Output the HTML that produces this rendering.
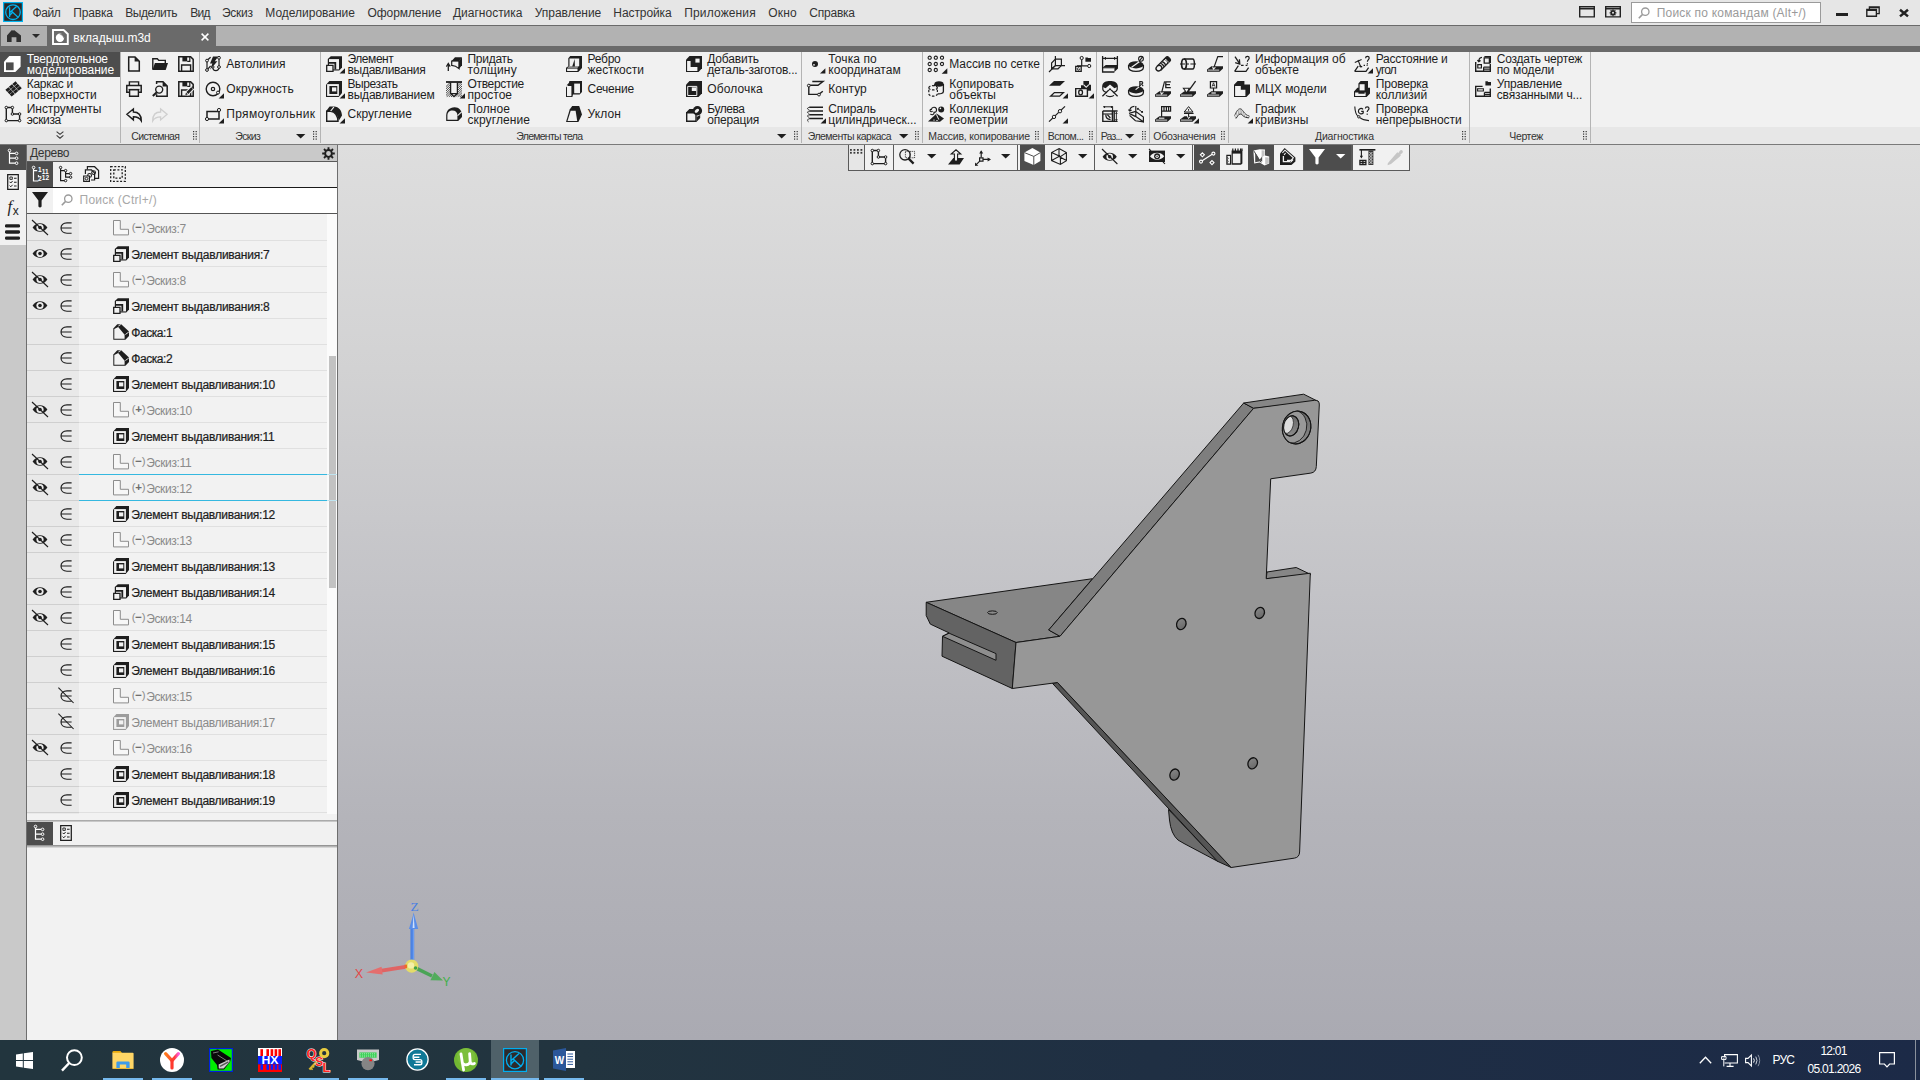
<!DOCTYPE html>
<html><head><meta charset="utf-8"><title>KOMPAS-3D</title>
<style>
html,body{margin:0;padding:0;}
body{width:1920px;height:1080px;overflow:hidden;position:relative;font-family:"Liberation Sans", sans-serif;background:#f0f0f0;}
svg{overflow:visible}
</style></head><body>
<div style="position:absolute;left:0px;top:0px;width:1920px;height:25px;background:#e6e6e6;"></div><svg style="position:absolute;left:3.00px;top:2.00px;" width="20" height="20" viewBox="0 0 20 20"><rect x="0.6" y="0.6" width="18.8" height="18.8" fill="#2c2727" stroke="#00b4f0" stroke-width="1.2"/><circle cx="10" cy="10.2" r="7.3" fill="none" stroke="#00b4f0" stroke-width="1.3"/><path d="M6.6 5.2 V15 M6.8 10.5 L13.5 4.6 M8.6 9.2 L15.2 15.4 M6.8 13.2 L9.6 10.3" fill="none" stroke="#00b4f0" stroke-width="1.3" /></svg><span style="position:absolute;top:7.00px;font-size:12px;line-height:12px;color:#333;white-space:nowrap;left:32.50px;letter-spacing:-0.405px;">Файл</span><span style="position:absolute;top:7.00px;font-size:12px;line-height:12px;color:#333;white-space:nowrap;left:73.30px;letter-spacing:-0.169px;">Правка</span><span style="position:absolute;top:7.00px;font-size:12px;line-height:12px;color:#333;white-space:nowrap;left:125.30px;letter-spacing:-0.451px;">Выделить</span><span style="position:absolute;top:7.00px;font-size:12px;line-height:12px;color:#333;white-space:nowrap;left:190.30px;letter-spacing:-0.800px;">Вид</span><span style="position:absolute;top:7.00px;font-size:12px;line-height:12px;color:#333;white-space:nowrap;left:222.00px;letter-spacing:-0.273px;">Эскиз</span><span style="position:absolute;top:7.00px;font-size:12px;line-height:12px;color:#333;white-space:nowrap;left:265.30px;letter-spacing:-0.008px;">Моделирование</span><span style="position:absolute;top:7.00px;font-size:12px;line-height:12px;color:#333;white-space:nowrap;left:367.50px;letter-spacing:-0.076px;">Оформление</span><span style="position:absolute;top:7.00px;font-size:12px;line-height:12px;color:#333;white-space:nowrap;left:453.00px;letter-spacing:-0.008px;">Диагностика</span><span style="position:absolute;top:7.00px;font-size:12px;line-height:12px;color:#333;white-space:nowrap;left:534.70px;letter-spacing:-0.013px;">Управление</span><span style="position:absolute;top:7.00px;font-size:12px;line-height:12px;color:#333;white-space:nowrap;left:613.30px;letter-spacing:-0.085px;">Настройка</span><span style="position:absolute;top:7.00px;font-size:12px;line-height:12px;color:#333;white-space:nowrap;left:684.30px;letter-spacing:0.131px;">Приложения</span><span style="position:absolute;top:7.00px;font-size:12px;line-height:12px;color:#333;white-space:nowrap;left:768.30px;letter-spacing:0.170px;">Окно</span><span style="position:absolute;top:7.00px;font-size:12px;line-height:12px;color:#333;white-space:nowrap;left:809.30px;letter-spacing:-0.230px;">Справка</span><svg style="position:absolute;left:1579.00px;top:6.20px;" width="16" height="11.6" viewBox="0 0 16 11.6"><path d="M0.7 0.7 H15.3 V10.9 H0.7 Z M0.7 2.7 H15.3" fill="none" stroke="#222" stroke-width="1.4" /></svg><svg style="position:absolute;left:1605.00px;top:6.20px;" width="16" height="11.6" viewBox="0 0 16 11.6"><path d="M0.7 0.7 H15.3 V10.9 H0.7 Z M0.7 2.7 H15.3" fill="none" stroke="#222" stroke-width="1.4" /><circle cx="8" cy="6.8" r="2.5" fill="#222"/><path d="M8 3.4 V10.2 M4.6 6.8 H11.4 M5.6 4.4 L10.4 9.2 M10.4 4.4 L5.6 9.2" fill="none" stroke="#222" stroke-width="1.3" /><circle cx="8" cy="6.8" r="1" fill="#e6e6e6"/></svg><div style="position:absolute;left:1631.3px;top:2.3px;width:189.4px;height:21.2px;background:#fff;border:1px solid #9a9a9a;box-sizing:border-box;"></div><svg style="position:absolute;left:1638.00px;top:6.50px;" width="12" height="12" viewBox="0 0 12 12"><circle cx="7.3" cy="4.7" r="3.7" fill="none" stroke="#9a9a9a" stroke-width="1.3"/><path d="M4.6 7.4 L0.8 11.2" fill="none" stroke="#9a9a9a" stroke-width="1.6" /></svg><span style="position:absolute;top:7.00px;font-size:12px;line-height:12px;color:#9a9a9a;white-space:nowrap;left:1656.70px;letter-spacing:0.208px;">Поиск по командам (Alt+/)</span><div style="position:absolute;left:1836.2px;top:13.4px;width:11.6px;height:2.6px;background:#222;"></div><svg style="position:absolute;left:1866.00px;top:6.00px;" width="14" height="11" viewBox="0 0 14 11"><path d="M0.8 3.4 H10.4 V10.2 H0.8 Z M0.8 4.4 H10.4" fill="none" stroke="#222" stroke-width="1.4" /><path d="M3.4 3.2 V0.9 H13.2 V7.6 H10.6 M3.4 1.6 H13.2" fill="none" stroke="#222" stroke-width="1.3" /></svg><svg style="position:absolute;left:1898.80px;top:8.60px;" width="10" height="8.2" viewBox="0 0 10 8.2"><path d="M1 0.8 L9 7.4 M9 0.8 L1 7.4" fill="none" stroke="#222" stroke-width="2.5" /></svg><div style="position:absolute;left:0px;top:25px;width:1920px;height:26.6px;background:#6a6a6a;"></div><div style="position:absolute;left:216px;top:26.3px;width:1704px;height:19.7px;background:#b2b2b2;"></div><div style="position:absolute;left:1px;top:26.3px;width:46px;height:19.7px;background:#b0b0b0;"></div><svg style="position:absolute;left:6.50px;top:30.00px;" width="14" height="12" viewBox="0 0 14 12"><path d="M0 5.6 L4.6 0.2 L5.8 0.2 L5.8 1 L7 0 L14 5.6 V12 H9.4 V7.2 H4.6 V12 H0 Z" fill="#303030" /></svg><svg style="position:absolute;left:32.00px;top:33.50px;" width="8" height="4" viewBox="0 0 8 4"><path d="M0 0 H8 L4 4 Z" fill="#2a2a2a" /></svg><svg style="position:absolute;left:52.00px;top:28.50px;" width="17" height="16" viewBox="0 0 17 16"><path d="M1 1 H11.6 L15.8 5 V15 H1 Z" fill="none" stroke="#fff" stroke-width="1.9" /><circle cx="8" cy="8.8" r="4.2" fill="#fff"/><path d="M8.6 6 A3 3 0 0 1 11.4 9 A3.6 3.6 0 0 0 8.6 6 Z M7.4 5.6 A3.4 3.4 0 0 1 11.6 9.6 A2.4 2.4 0 0 0 7.4 5.6Z" fill="#6a6a6a" /></svg><span style="position:absolute;top:32.00px;font-size:12px;line-height:12px;color:#fff;white-space:nowrap;left:73.30px;letter-spacing:0.013px;">вкладыш.m3d</span><svg style="position:absolute;left:200.70px;top:33.00px;" width="8" height="8" viewBox="0 0 8 8"><path d="M0.6 0.6 L7.4 7.4 M7.4 0.6 L0.6 7.4" fill="none" stroke="#fff" stroke-width="1.5" /></svg><div style="position:absolute;left:0px;top:51.6px;width:1920px;height:75.4px;background:#f1f1f1;"></div><div style="position:absolute;left:0px;top:127px;width:1920px;height:16.5px;background:#e7e7e7;"></div><div style="position:absolute;left:0px;top:143.5px;width:1920px;height:1.2px;background:#7a7a7a;"></div><div style="position:absolute;left:0px;top:51.5px;width:119.5px;height:25px;background:#4d4d4d;"></div><svg style="position:absolute;left:4.20px;top:56.00px;" width="16.6" height="16" viewBox="0 0 16.6 16"><path d="M0 5.7 L5.3 0 H16.6 V10.7 L11.3 16 H0 Z" fill="#fff" /><rect x="2" y="6.4" width="7.6" height="7.8" fill="#4d4d4d"/></svg><span style="position:absolute;top:53.00px;font-size:12px;line-height:12px;color:#fff;white-space:nowrap;left:26.70px;letter-spacing:-0.259px;">Твердотельное</span><span style="position:absolute;top:64.00px;font-size:12px;line-height:12px;color:#fff;white-space:nowrap;left:26.70px;letter-spacing:-0.035px;">моделирование</span><svg style="position:absolute;left:4.50px;top:81.00px;" width="17" height="16" viewBox="0 0 17 16"><g transform="matrix(3.5 -2.9 2.15 2.35 0.1 8.8)"><rect x="0.05" y="0.05" width="0.9" height="0.9" fill="#1e1e1e"/><rect x="0.05" y="1.05" width="0.9" height="0.9" fill="#1e1e1e"/><rect x="0.05" y="2.05" width="0.9" height="0.9" fill="#1e1e1e"/><rect x="1.05" y="0.05" width="0.9" height="0.9" fill="#1e1e1e"/><rect x="1.05" y="1.05" width="0.9" height="0.9" fill="#1e1e1e"/><rect x="1.05" y="2.05" width="0.9" height="0.9" fill="#1e1e1e"/><rect x="2.05" y="0.05" width="0.9" height="0.9" fill="#1e1e1e"/><rect x="2.05" y="1.05" width="0.9" height="0.9" fill="#1e1e1e"/><rect x="2.05" y="2.05" width="0.9" height="0.9" fill="#1e1e1e"/></g></svg><span style="position:absolute;top:78.00px;font-size:12px;line-height:12px;color:#1e1e1e;white-space:nowrap;left:26.70px;letter-spacing:-0.280px;">Каркас и</span><span style="position:absolute;top:89.00px;font-size:12px;line-height:12px;color:#1e1e1e;white-space:nowrap;left:26.70px;letter-spacing:-0.013px;">поверхности</span><svg style="position:absolute;left:5.00px;top:106.00px;" width="16" height="16" viewBox="0 0 16 16"><path d="M1.3 1.5 H7.4 V8 H14.6 V14.6 H1.3 Z" fill="none" stroke="#1e1e1e" stroke-width="1.4" /><circle cx="1.3" cy="1.5" r="1.25" fill="#f1f1f1" stroke="#1e1e1e" stroke-width="1"/><circle cx="7.4" cy="1.5" r="1.25" fill="#f1f1f1" stroke="#1e1e1e" stroke-width="1"/><circle cx="7.4" cy="8" r="1.25" fill="#f1f1f1" stroke="#1e1e1e" stroke-width="1"/><circle cx="14.6" cy="8" r="1.25" fill="#f1f1f1" stroke="#1e1e1e" stroke-width="1"/><circle cx="14.6" cy="14.6" r="1.25" fill="#f1f1f1" stroke="#1e1e1e" stroke-width="1"/><circle cx="1.3" cy="14.6" r="1.25" fill="#f1f1f1" stroke="#1e1e1e" stroke-width="1"/></svg><span style="position:absolute;top:103.00px;font-size:12px;line-height:12px;color:#1e1e1e;white-space:nowrap;left:26.70px;letter-spacing:-0.023px;">Инструменты</span><span style="position:absolute;top:114.00px;font-size:12px;line-height:12px;color:#1e1e1e;white-space:nowrap;left:26.70px;letter-spacing:-0.333px;">эскиза</span><svg style="position:absolute;left:56.00px;top:130.50px;" width="8" height="8" viewBox="0 0 8 8"><path d="M0.6 0.6 L4 3.4 L7.4 0.6 M0.6 4.4 L4 7.2 L7.4 4.4" fill="none" stroke="#3a3a3a" stroke-width="1.1" /></svg><div style="position:absolute;left:120.0px;top:52px;width:1px;height:91px;background:#b4b4b4;"></div><div style="position:absolute;left:199.0px;top:52px;width:1px;height:91px;background:#b4b4b4;"></div><svg style="position:absolute;left:126.00px;top:56.00px;" width="16" height="16" viewBox="0 0 16 16"><path d="M2.7 0.9 H9 L13.3 5.2 V15.1 H2.7 Z" fill="none" stroke="#1e1e1e" stroke-width="1.5" /><path d="M8.6 0.9 L13.3 5.6 H8.6 Z" fill="#1e1e1e" /></svg><svg style="position:absolute;left:152.00px;top:56.00px;" width="16" height="16" viewBox="0 0 16 16"><path d="M0.8 13.4 V2.7 H5.3 L6.8 4.4 H13.3 V7" fill="none" stroke="#1e1e1e" stroke-width="1.4" /><path d="M2.9 7 H16 L13.7 13.9 H0.4 Z" fill="#1e1e1e" /></svg><svg style="position:absolute;left:178.00px;top:56.00px;" width="16" height="16" viewBox="0 0 16 16"><path d="M0.8 0.8 H12.6 L15.2 3.4 V15.2 H0.8 Z" fill="none" stroke="#1e1e1e" stroke-width="1.5" /><path d="M4.4 0.8 H9.2 V5.4 H4.4 Z" fill="#1e1e1e" /><path d="M9.2 5.4 H11.8 V0.8" fill="none" stroke="#1e1e1e" stroke-width="1.2" /><path d="M3.6 15.2 V9 H12.6 V15.2" fill="none" stroke="#1e1e1e" stroke-width="1.4" /></svg><svg style="position:absolute;left:126.00px;top:81.00px;" width="16" height="16" viewBox="0 0 16 16"><path d="M3.4 4.2 V0.9 H12.6 V4.2" fill="none" stroke="#1e1e1e" stroke-width="1.4" /><path d="M3.4 11.3 H0.8 V4.4 H15.2 V11.3 H12.6" fill="none" stroke="#1e1e1e" stroke-width="1.5" /><path d="M3.6 8.6 H12.4 V15.2 H3.6 Z" fill="#f1f1f1" stroke="#1e1e1e" stroke-width="1.4" /><path d="M2.6 8.6 H13.4" fill="none" stroke="#1e1e1e" stroke-width="1.4" /></svg><svg style="position:absolute;left:152.00px;top:81.00px;" width="16" height="16" viewBox="0 0 16 16"><path d="M4.6 3 V0.8 H11 L15.2 5 V15.2 H4.6 V13.2" fill="none" stroke="#1e1e1e" stroke-width="1.5" /><path d="M10.6 0.8 L15.2 5.4 H10.6 Z" fill="#1e1e1e" /><circle cx="7.2" cy="8.6" r="3.5" fill="#f1f1f1" stroke="#1e1e1e" stroke-width="1.4"/><path d="M4.8 11.2 L0.8 15" fill="none" stroke="#1e1e1e" stroke-width="2" /></svg><svg style="position:absolute;left:178.00px;top:81.00px;" width="16" height="16" viewBox="0 0 16 16"><path d="M0.8 0.8 H12.6 L15.2 3.4 V15.2 H0.8 Z" fill="none" stroke="#1e1e1e" stroke-width="1.5" /><path d="M4.4 0.8 H9.2 V5.4 H4.4 Z" fill="#1e1e1e" /><path d="M9.2 5.4 H11.8 V0.8" fill="none" stroke="#1e1e1e" stroke-width="1.2" /><path d="M3.6 15.2 V9 H12.6 V15.2" fill="none" stroke="#1e1e1e" stroke-width="1.4" /><path d="M8.2 13.2 L14.6 6.8" fill="none" stroke="#f1f1f1" stroke-width="4.6" /><path d="M9.4 12 L14.2 7.2" fill="none" stroke="#1e1e1e" stroke-width="2.6" /><path d="M7.4 14 L8 11.6 L9.8 13.4 Z" fill="#1e1e1e" /><path d="M14.4 5.2 L16 6.8 L15.2 7.6 L13.6 6 Z" fill="#1e1e1e" /></svg><svg style="position:absolute;left:126.00px;top:107.50px;" width="16" height="14" viewBox="0 0 16 14"><path d="M0.9 6.3 L7.4 0.9 V4 C12.2 4 15.3 7.2 15.3 12.8 C13.5 9.8 11.2 8.8 7.4 8.8 V11.9 Z" fill="none" stroke="#1e1e1e" stroke-width="1.4" stroke-linejoin="miter"/></svg><svg style="position:absolute;left:152.00px;top:107.50px;" width="16" height="14" viewBox="0 0 16 14"><path d="M15.1 6.3 L8.6 0.9 V4 C3.8 4 0.7 7.2 0.7 12.8 C2.5 9.8 4.8 8.8 8.6 8.8 V11.9 Z" fill="none" stroke="#cfcfcf" stroke-width="1.3" /></svg><span style="position:absolute;top:131.00px;font-size:10.5px;line-height:10.5px;color:#333;white-space:nowrap;left:131.20px;letter-spacing:-0.623px;">Системная</span><svg style="position:absolute;left:192.50px;top:130.50px;" width="4" height="9" viewBox="0 0 4 9"><rect x="0" y="0" width="1.2" height="1.2" fill="#333"/><rect x="0" y="2.5" width="1.2" height="1.2" fill="#333"/><rect x="0" y="5" width="1.2" height="1.2" fill="#333"/><rect x="0" y="7.5" width="1.2" height="1.2" fill="#333"/><rect x="2.6" y="0" width="1.2" height="1.2" fill="#333"/><rect x="2.6" y="2.5" width="1.2" height="1.2" fill="#333"/><rect x="2.6" y="5" width="1.2" height="1.2" fill="#333"/><rect x="2.6" y="7.5" width="1.2" height="1.2" fill="#333"/></svg><svg style="position:absolute;left:205.00px;top:56.00px;" width="16" height="16" viewBox="0 0 16 16"><path d="M2 5.6 V13 M14 2.8 V10 M2.8 3.8 L5.6 1.2 M2.8 13.2 L5.6 10" fill="none" stroke="#1e1e1e" stroke-width="1.2" /><path d="M7.8 11.6 A3.1 3.1 0 0 0 14 11.6" fill="none" stroke="#1e1e1e" stroke-width="1.2" /><path d="M8 0.6 H13.2 L9.8 5.2 H12.4 L5 13.8 L7.4 7.4 H5 Z" fill="#1e1e1e" /><circle cx="2" cy="4.6" r="1.4" fill="#f1f1f1" stroke="#1e1e1e" stroke-width="1"/><circle cx="14" cy="1.8" r="1.4" fill="#f1f1f1" stroke="#1e1e1e" stroke-width="1"/><circle cx="14" cy="11" r="1.4" fill="#f1f1f1" stroke="#1e1e1e" stroke-width="1"/><circle cx="2" cy="14" r="1.4" fill="#f1f1f1" stroke="#1e1e1e" stroke-width="1"/><circle cx="8" cy="11" r="1.1" fill="#f1f1f1" stroke="#1e1e1e" stroke-width="1"/></svg><span style="position:absolute;top:58.00px;font-size:12px;line-height:12px;color:#1e1e1e;white-space:nowrap;left:226.30px;letter-spacing:-0.028px;">Автолиния</span><svg style="position:absolute;left:205.00px;top:81.00px;" width="16" height="16" viewBox="0 0 16 16"><circle cx="8" cy="8" r="6.8" fill="none" stroke="#1e1e1e" stroke-width="1.4"/><circle cx="8" cy="8" r="1.7" fill="none" stroke="#1e1e1e" stroke-width="1.2"/><circle cx="13" cy="11.6" r="1.5" fill="#f1f1f1" stroke="#1e1e1e" stroke-width="1"/><path d="M19 17.6 L19 12.200000000000001 L13.6 17.6 Z" fill="#1e1e1e"/></svg><span style="position:absolute;top:83.00px;font-size:12px;line-height:12px;color:#1e1e1e;white-space:nowrap;left:226.30px;letter-spacing:0.117px;">Окружность</span><svg style="position:absolute;left:205.00px;top:106.00px;" width="16" height="16" viewBox="0 0 16 16"><path d="M2 5.4 H14 V13 H2 Z" fill="none" stroke="#1e1e1e" stroke-width="1.5" /><circle cx="14" cy="4" r="1.6" fill="#f1f1f1" stroke="#1e1e1e" stroke-width="1"/><circle cx="2" cy="13" r="1.6" fill="#f1f1f1" stroke="#1e1e1e" stroke-width="1"/><path d="M19 17.6 L19 12.200000000000001 L13.6 17.6 Z" fill="#1e1e1e"/></svg><span style="position:absolute;top:108.00px;font-size:12px;line-height:12px;color:#1e1e1e;white-space:nowrap;left:226.30px;letter-spacing:0.324px;">Прямоугольник</span><span style="position:absolute;top:131.00px;font-size:10.5px;line-height:10.5px;color:#333;white-space:nowrap;left:235.30px;letter-spacing:-0.645px;">Эскиз</span><svg style="position:absolute;left:296.30px;top:133.70px;" width="9.4" height="4.6" viewBox="0 0 9.4 4.6"><path d="M0 0 H9.4 L4.7 4.6 Z" fill="#1e1e1e" /></svg><svg style="position:absolute;left:313.00px;top:130.50px;" width="4" height="9" viewBox="0 0 4 9"><rect x="0" y="0" width="1.2" height="1.2" fill="#333"/><rect x="0" y="2.5" width="1.2" height="1.2" fill="#333"/><rect x="0" y="5" width="1.2" height="1.2" fill="#333"/><rect x="0" y="7.5" width="1.2" height="1.2" fill="#333"/><rect x="2.6" y="0" width="1.2" height="1.2" fill="#333"/><rect x="2.6" y="2.5" width="1.2" height="1.2" fill="#333"/><rect x="2.6" y="5" width="1.2" height="1.2" fill="#333"/><rect x="2.6" y="7.5" width="1.2" height="1.2" fill="#333"/></svg><div style="position:absolute;left:320.0px;top:52px;width:1px;height:91px;background:#b4b4b4;"></div><svg style="position:absolute;left:326.00px;top:56.00px;" width="16" height="16" viewBox="0 0 16 16"><path d="M1.8 3 L4.8 0.2 H16 V11.6 L13.2 14.4 H1.8 Z" fill="#1e1e1e" /><rect x="3" y="3.1" width="10.00" height="10.30" fill="#f1f1f1"/><path d="M3 6 H10.2 V13.4 H8.4 V7.8 H3 Z" fill="#1e1e1e" /><path d="M0.7 9.4 H7 V15.3 H0.7 Z" fill="#f1f1f1" stroke="#1e1e1e" stroke-width="1.3" /><path d="M19 17.6 L19 12.200000000000001 L13.6 17.6 Z" fill="#1e1e1e"/></svg><span style="position:absolute;top:53.00px;font-size:12px;line-height:12px;color:#1e1e1e;white-space:nowrap;left:347.50px;letter-spacing:-0.442px;">Элемент</span><span style="position:absolute;top:64.00px;font-size:12px;line-height:12px;color:#1e1e1e;white-space:nowrap;left:347.50px;letter-spacing:-0.267px;">выдавливания</span><svg style="position:absolute;left:326.00px;top:81.00px;" width="16" height="16" viewBox="0 0 16 16"><path d="M0 3.7 L3.4 0 H16 V12.1 L12.7 16 H0 Z" fill="#1e1e1e" /><rect x="1.1" y="3.1" width="11.80" height="11.80" fill="#f1f1f1"/><path d="M3.4 5 H11.3 V13 H3.4 Z" fill="#1e1e1e" /><rect x="6" y="6.4" width="4.30" height="4.00" fill="#f1f1f1"/><path d="M19 17.6 L19 12.200000000000001 L13.6 17.6 Z" fill="#1e1e1e"/></svg><span style="position:absolute;top:78.00px;font-size:12px;line-height:12px;color:#1e1e1e;white-space:nowrap;left:347.50px;letter-spacing:-0.411px;">Вырезать</span><span style="position:absolute;top:89.00px;font-size:12px;line-height:12px;color:#1e1e1e;white-space:nowrap;left:347.50px;letter-spacing:-0.205px;">выдавливанием</span><svg style="position:absolute;left:326.00px;top:106.00px;" width="16" height="16" viewBox="0 0 16 16"><path d="M0.7 15.3 V5.2 H4.6 Q11.4 6 12 15.3 Z" fill="#f1f1f1" stroke="#1e1e1e" stroke-width="1.4" /><path d="M0 5.2 L3.6 0.6 H8 C13 1 15.8 4.6 16 9.6 L12.6 15 C12.4 9 9 5.6 4.4 5.2 Z" fill="#1e1e1e" /><path d="M4.2 4.8 L7.4 0.8 L8.4 1.2 L5.2 5.2 Z" fill="#f1f1f1" /><path d="M19 17.6 L19 12.200000000000001 L13.6 17.6 Z" fill="#1e1e1e"/></svg><span style="position:absolute;top:108.00px;font-size:12px;line-height:12px;color:#1e1e1e;white-space:nowrap;left:347.50px;letter-spacing:0.028px;">Скругление</span><svg style="position:absolute;left:445.70px;top:57.00px;" width="16" height="14" viewBox="0 0 16 14"><path d="M2.3 14 V7" fill="none" stroke="#1e1e1e" stroke-width="1.3" /><path d="M0.4 9.6 L2.3 6.4 L4.2 9.6" fill="none" stroke="#1e1e1e" stroke-width="1.2" /><path d="M5.7 4 H13 V11.6 Q9.6 8.6 5.7 8.4 Z" fill="#f1f1f1" stroke="#1e1e1e" stroke-width="1.2" /><path d="M5.4 4.2 L9 0.3 H16 L12.8 4.2 Z" fill="#1e1e1e" /><path d="M12.8 4 L16 0.3 V8.2 L12.8 12 Z" fill="#1e1e1e" /></svg><span style="position:absolute;top:53.00px;font-size:12px;line-height:12px;color:#1e1e1e;white-space:nowrap;left:467.50px;letter-spacing:-0.279px;">Придать</span><span style="position:absolute;top:64.00px;font-size:12px;line-height:12px;color:#1e1e1e;white-space:nowrap;left:467.50px;letter-spacing:0.203px;">толщину</span><svg style="position:absolute;left:445.70px;top:80.85px;" width="16" height="16.3" viewBox="0 0 16 16.3"><clipPath id="hc"><path d="M0 1 H4.4 V13.6 L7.4 16.3 H0 Z M11.6 1 H16 V16.3 H8.8 L11.6 13.6 Z"/></clipPath><g clip-path="url(#hc)"><path d="M-10.4 16 L5.6 0" stroke="#3a3a3a" stroke-width="0.9"/><path d="M-8.2 16 L7.8 0" stroke="#3a3a3a" stroke-width="0.9"/><path d="M-6.0 16 L10.0 0" stroke="#3a3a3a" stroke-width="0.9"/><path d="M-3.8 16 L12.2 0" stroke="#3a3a3a" stroke-width="0.9"/><path d="M-1.5999999999999996 16 L14.4 0" stroke="#3a3a3a" stroke-width="0.9"/><path d="M0.6000000000000005 16 L16.6 0" stroke="#3a3a3a" stroke-width="0.9"/><path d="M2.8000000000000007 16 L18.8 0" stroke="#3a3a3a" stroke-width="0.9"/><path d="M5.0 16 L21.0 0" stroke="#3a3a3a" stroke-width="0.9"/><path d="M7.200000000000001 16 L23.200000000000003 0" stroke="#3a3a3a" stroke-width="0.9"/><path d="M9.400000000000002 16 L25.400000000000002 0" stroke="#3a3a3a" stroke-width="0.9"/><path d="M11.600000000000001 16 L27.6 0" stroke="#3a3a3a" stroke-width="0.9"/><path d="M13.8 16 L29.8 0" stroke="#3a3a3a" stroke-width="0.9"/></g><path d="M0 1 H16" fill="none" stroke="#1e1e1e" stroke-width="1.8" /><path d="M4.6 1.4 V12.6 L8 15.6 L11.4 12.6 V1.4 M4.6 12.6 H11.4" fill="none" stroke="#1e1e1e" stroke-width="1.3" /><path d="M19 17.6 L19 12.200000000000001 L13.6 17.6 Z" fill="#1e1e1e"/></svg><span style="position:absolute;top:78.00px;font-size:12px;line-height:12px;color:#1e1e1e;white-space:nowrap;left:467.50px;letter-spacing:-0.325px;">Отверстие</span><span style="position:absolute;top:89.00px;font-size:12px;line-height:12px;color:#1e1e1e;white-space:nowrap;left:467.50px;letter-spacing:-0.010px;">простое</span><svg style="position:absolute;left:445.70px;top:107.00px;" width="16" height="14" viewBox="0 0 16 14"><path d="M0.2 14 V8.4 C0.2 3.6 3.4 0.4 8.6 0.2 C13 0.2 16 3.6 16 8 V10 L12.2 14 Z" fill="#1e1e1e" /><path d="M1.4 12.8 V8.4 C1.4 5 3.6 3.4 6.4 3.4 C9.4 3.4 11.4 5.2 11.4 8.4 V12.8 Z" fill="#f1f1f1" /><path d="M11.6 8.6 L15.6 4.8" fill="none" stroke="#f1f1f1" stroke-width="1.1" /></svg><span style="position:absolute;top:103.00px;font-size:12px;line-height:12px;color:#1e1e1e;white-space:nowrap;left:467.50px;letter-spacing:0.097px;">Полное</span><span style="position:absolute;top:114.00px;font-size:12px;line-height:12px;color:#1e1e1e;white-space:nowrap;left:467.50px;letter-spacing:0.101px;">скругление</span><svg style="position:absolute;left:566.00px;top:56.00px;" width="16" height="16" viewBox="0 0 16 16"><path d="M2.3 2.2 L4.2 0 H16 V12 L12.3 16 H0 V11.8 L2.3 10.2 Z" fill="#1e1e1e" /><rect x="3.5" y="2.5" width="9.70" height="7.70" fill="#f1f1f1"/><rect x="1.1" y="12.6" width="10.40" height="2.40" fill="#f1f1f1"/><path d="M1.4 11.6 L3 10.6 H12.6 L11.6 11.6 Z" fill="#f1f1f1" /><path d="M8.7 3 L8.9 10.6 L6.2 10.6 Z" fill="#1e1e1e" /></svg><span style="position:absolute;top:53.00px;font-size:12px;line-height:12px;color:#1e1e1e;white-space:nowrap;left:587.50px;letter-spacing:-0.238px;">Ребро</span><span style="position:absolute;top:64.00px;font-size:12px;line-height:12px;color:#1e1e1e;white-space:nowrap;left:587.50px;letter-spacing:0.004px;">жесткости</span><svg style="position:absolute;left:566.00px;top:81.00px;" width="16" height="16" viewBox="0 0 16 16"><path d="M0 6.4 L2.4 3.7 L3.4 0 H16 V11 L13.6 13.4 H7 L6.4 16 H0 Z" fill="#1e1e1e" /><path d="M2.4 3.7 L5.7 0 H8 V3.7Z" fill="#1e1e1e" /><rect x="1" y="5" width="4.40" height="10.10" fill="#f1f1f1"/><rect x="8.2" y="2.6" width="5.80" height="9.60" fill="#f1f1f1"/><path d="M0.6 4.3 L2.6 2.2 H7 V4.3 Z" fill="#1e1e1e" /></svg><span style="position:absolute;top:83.00px;font-size:12px;line-height:12px;color:#1e1e1e;white-space:nowrap;left:587.50px;letter-spacing:-0.196px;">Сечение</span><svg style="position:absolute;left:566.00px;top:106.00px;" width="16" height="16" viewBox="0 0 16 16"><path d="M0 16 L3.7 3.6 L6.2 0 H13.2 L16 8.4 L12.4 16 Z" fill="#1e1e1e" /><path d="M1.5 15 L4.7 4.8 H9.6 L11.2 15 Z" fill="#f1f1f1" /></svg><span style="position:absolute;top:108.00px;font-size:12px;line-height:12px;color:#1e1e1e;white-space:nowrap;left:587.50px;letter-spacing:0.098px;">Уклон</span><svg style="position:absolute;left:686.00px;top:56.00px;" width="16" height="16" viewBox="0 0 16 16"><path d="M0 3.7 L3.5 0 H16 V12.3 L12.5 16 H0 Z" fill="#1e1e1e" /><path d="M1.1 4.9 H4.6 V11 H11.4 V14.9 H1.1 Z" fill="#f1f1f1" /><rect x="9.4" y="2.6" width="4.20" height="4.00" fill="#f1f1f1"/></svg><span style="position:absolute;top:53.00px;font-size:12px;line-height:12px;color:#1e1e1e;white-space:nowrap;left:707.30px;letter-spacing:-0.192px;">Добавить</span><span style="position:absolute;top:64.00px;font-size:12px;line-height:12px;color:#1e1e1e;white-space:nowrap;left:707.30px;letter-spacing:-0.205px;">деталь-заготов...</span><svg style="position:absolute;left:686.00px;top:81.00px;" width="16" height="16" viewBox="0 0 16 16"><path d="M0 3.7 L3.5 0 H16 V12.3 L12.5 16 H0 Z" fill="#1e1e1e" /><path d="M1.7 5.4 H10.8 V14.5 H1.7 Z" fill="none" stroke="#f1f1f1" stroke-width="1" /><rect x="5.8" y="6.4" width="4.40" height="3.60" fill="#f1f1f1"/></svg><span style="position:absolute;top:83.00px;font-size:12px;line-height:12px;color:#1e1e1e;white-space:nowrap;left:707.30px;letter-spacing:0.113px;">Оболочка</span><svg style="position:absolute;left:686.00px;top:106.00px;" width="16" height="16" viewBox="0 0 16 16"><path d="M0 6.6 L3.4 3 H9 L10.6 6.6 Z" fill="#1e1e1e" /><path d="M0.7 6.8 H10 V15.3 H0.7 Z" fill="#f1f1f1" stroke="#1e1e1e" stroke-width="1.4" /><path d="M10.6 15.8 L14.2 12 V9 L10.6 11 Z" fill="#1e1e1e" /><circle cx="11.4" cy="4.8" r="4.7" fill="#1e1e1e"/><ellipse cx="10.9" cy="4.7" rx="2.5" ry="1.5" fill="#f1f1f1" transform="rotate(-38 10.9 4.7)"/></svg><span style="position:absolute;top:103.00px;font-size:12px;line-height:12px;color:#1e1e1e;white-space:nowrap;left:707.30px;letter-spacing:-0.447px;">Булева</span><span style="position:absolute;top:114.00px;font-size:12px;line-height:12px;color:#1e1e1e;white-space:nowrap;left:707.30px;letter-spacing:-0.183px;">операция</span><span style="position:absolute;top:131.00px;font-size:10.5px;line-height:10.5px;color:#333;white-space:nowrap;left:516.30px;letter-spacing:-0.729px;">Элементы тела</span><svg style="position:absolute;left:777.30px;top:133.70px;" width="9.4" height="4.6" viewBox="0 0 9.4 4.6"><path d="M0 0 H9.4 L4.7 4.6 Z" fill="#1e1e1e" /></svg><svg style="position:absolute;left:793.50px;top:130.50px;" width="4" height="9" viewBox="0 0 4 9"><rect x="0" y="0" width="1.2" height="1.2" fill="#333"/><rect x="0" y="2.5" width="1.2" height="1.2" fill="#333"/><rect x="0" y="5" width="1.2" height="1.2" fill="#333"/><rect x="0" y="7.5" width="1.2" height="1.2" fill="#333"/><rect x="2.6" y="0" width="1.2" height="1.2" fill="#333"/><rect x="2.6" y="2.5" width="1.2" height="1.2" fill="#333"/><rect x="2.6" y="5" width="1.2" height="1.2" fill="#333"/><rect x="2.6" y="7.5" width="1.2" height="1.2" fill="#333"/></svg><div style="position:absolute;left:801.2px;top:52px;width:1px;height:91px;background:#b4b4b4;"></div><svg style="position:absolute;left:807.00px;top:56.00px;" width="16" height="16" viewBox="0 0 16 16"><circle cx="8" cy="8" r="3" fill="#1e1e1e"/><circle cx="7" cy="8.8" r="0.9" fill="#f1f1f1"/><path d="M18.4 17.6 L18.4 12.200000000000001 L12.999999999999998 17.6 Z" fill="#1e1e1e"/></svg><span style="position:absolute;top:53.00px;font-size:12px;line-height:12px;color:#1e1e1e;white-space:nowrap;left:828.30px;letter-spacing:0.093px;">Точка по</span><span style="position:absolute;top:64.00px;font-size:12px;line-height:12px;color:#1e1e1e;white-space:nowrap;left:828.30px;letter-spacing:0.023px;">координатам</span><svg style="position:absolute;left:807.00px;top:81.00px;" width="16" height="16" viewBox="0 0 16 16"><path d="M5.3 0.5 H16 L11 4.2 H1.8 V13.4 H12 L15.8 10.2" fill="none" stroke="#1e1e1e" stroke-width="1.4" /><circle cx="1.8" cy="4.6" r="1.4" fill="#f1f1f1" stroke="#1e1e1e" stroke-width="1"/><circle cx="12" cy="13.6" r="1.4" fill="#f1f1f1" stroke="#1e1e1e" stroke-width="1"/></svg><span style="position:absolute;top:83.00px;font-size:12px;line-height:12px;color:#1e1e1e;white-space:nowrap;left:828.30px;letter-spacing:-0.014px;">Контур</span><svg style="position:absolute;left:807.00px;top:106.00px;" width="16" height="16" viewBox="0 0 16 16"><path d="M2.4 1.3 H16 M2.4 5 H16 M2.4 8.7 H16 M2.4 12.6 H16" fill="none" stroke="#1e1e1e" stroke-width="1.5" /><path d="M2.8 1.3 C-0.2 1.5 -0.2 3.4 2.2 3.6 M2.8 5 C-0.2 5.2 -0.2 7.1 2.2 7.299999999999999 M2.8 8.7 C-0.2 8.899999999999999 -0.2 11.0 2.2 11.2" fill="none" stroke="#1e1e1e" stroke-width="0.9" /><path d="M2.8 12.6 C0.2 12.8 0.2 15 1.4 15.8" fill="none" stroke="#1e1e1e" stroke-width="0.9" /><path d="M19 17.6 L19 12.200000000000001 L13.6 17.6 Z" fill="#1e1e1e"/></svg><span style="position:absolute;top:103.00px;font-size:12px;line-height:12px;color:#1e1e1e;white-space:nowrap;left:828.30px;letter-spacing:-0.128px;">Спираль</span><span style="position:absolute;top:114.00px;font-size:12px;line-height:12px;color:#1e1e1e;white-space:nowrap;left:828.30px;letter-spacing:-0.005px;">цилиндрическ...</span><span style="position:absolute;top:131.00px;font-size:10.5px;line-height:10.5px;color:#333;white-space:nowrap;left:807.70px;letter-spacing:-0.504px;">Элементы каркаса</span><svg style="position:absolute;left:898.60px;top:133.70px;" width="9.4" height="4.6" viewBox="0 0 9.4 4.6"><path d="M0 0 H9.4 L4.7 4.6 Z" fill="#1e1e1e" /></svg><svg style="position:absolute;left:914.50px;top:130.50px;" width="4" height="9" viewBox="0 0 4 9"><rect x="0" y="0" width="1.2" height="1.2" fill="#333"/><rect x="0" y="2.5" width="1.2" height="1.2" fill="#333"/><rect x="0" y="5" width="1.2" height="1.2" fill="#333"/><rect x="0" y="7.5" width="1.2" height="1.2" fill="#333"/><rect x="2.6" y="0" width="1.2" height="1.2" fill="#333"/><rect x="2.6" y="2.5" width="1.2" height="1.2" fill="#333"/><rect x="2.6" y="5" width="1.2" height="1.2" fill="#333"/><rect x="2.6" y="7.5" width="1.2" height="1.2" fill="#333"/></svg><div style="position:absolute;left:921.8px;top:52px;width:1px;height:91px;background:#b4b4b4;"></div><svg style="position:absolute;left:928.00px;top:56.00px;" width="16" height="16" viewBox="0 0 16 16"><circle cx="1.7" cy="1.7" r="1.6" fill="none" stroke="#1e1e1e" stroke-width="1.1"/><circle cx="1.7" cy="8" r="1.6" fill="none" stroke="#1e1e1e" stroke-width="1.1"/><circle cx="1.7" cy="14" r="1.6" fill="none" stroke="#1e1e1e" stroke-width="1.1"/><circle cx="7.8" cy="1.7" r="1.6" fill="none" stroke="#1e1e1e" stroke-width="1.1"/><circle cx="7.8" cy="8" r="1.6" fill="none" stroke="#1e1e1e" stroke-width="1.1"/><circle cx="7.8" cy="14" r="1.6" fill="none" stroke="#1e1e1e" stroke-width="1.1"/><circle cx="14" cy="1.7" r="1.6" fill="none" stroke="#1e1e1e" stroke-width="1.1"/><circle cx="14" cy="8" r="1.6" fill="none" stroke="#1e1e1e" stroke-width="1.1"/><path d="M19.3 17.8 L19.3 12.200000000000001 L13.700000000000001 17.8 Z" fill="#1e1e1e"/></svg><span style="position:absolute;top:58.00px;font-size:12px;line-height:12px;color:#1e1e1e;white-space:nowrap;left:949.30px;letter-spacing:-0.062px;">Массив по сетке</span><svg style="position:absolute;left:928.00px;top:80.85px;" width="16" height="16.3" viewBox="0 0 16 16.3"><path d="M0.8 6.8 C0.8 4 9 4 9.4 6.8 V12.6 C9.4 16 0.8 16 0.8 12.6 Z M0.8 6.8 C1 9.6 9.2 9.6 9.4 6.8" fill="none" stroke="#1e1e1e" stroke-width="1.2" stroke-dasharray="2.4 1.6"/><path d="M15.4 3 V10.4 C15.4 12.6 12 13 9.8 12.8" fill="none" stroke="#1e1e1e" stroke-width="1.3" /><ellipse cx="11" cy="3" rx="4.6" ry="2.7" fill="#1e1e1e"/><path d="M6.6 3.2 V5" fill="none" stroke="#1e1e1e" stroke-width="1.3" /></svg><span style="position:absolute;top:78.00px;font-size:12px;line-height:12px;color:#1e1e1e;white-space:nowrap;left:949.30px;letter-spacing:0.008px;">Копировать</span><span style="position:absolute;top:89.00px;font-size:12px;line-height:12px;color:#1e1e1e;white-space:nowrap;left:949.30px;letter-spacing:-0.021px;">объекты</span><svg style="position:absolute;left:928.00px;top:106.00px;" width="16" height="16" viewBox="0 0 16 16"><path d="M4.4 4.8 A1.2 1.2 0 1 1 3.4 3.4 A2.6 2.6 0 1 1 6 6.4 C6.6 8.4 4 9.4 2.4 8" fill="none" stroke="#1e1e1e" stroke-width="1.1" /><circle cx="13.2" cy="3.4" r="3" fill="#1e1e1e"/><circle cx="12.4" cy="2.4" r="0.8" fill="#f1f1f1"/><path d="M0 15.6 L8.6 7.6 L16 12.4 L12 15.8 Z" fill="#1e1e1e" /><path d="M8.4 8.4 L10.8 13.6" fill="none" stroke="#f1f1f1" stroke-width="1" /><rect x="5.4" y="13.6" width="1.20" height="1.00" fill="#f1f1f1"/><rect x="8.4" y="14" width="1.20" height="1.00" fill="#f1f1f1"/></svg><span style="position:absolute;top:103.00px;font-size:12px;line-height:12px;color:#1e1e1e;white-space:nowrap;left:949.30px;letter-spacing:-0.051px;">Коллекция</span><span style="position:absolute;top:114.00px;font-size:12px;line-height:12px;color:#1e1e1e;white-space:nowrap;left:949.30px;letter-spacing:0.105px;">геометрии</span><span style="position:absolute;top:131.00px;font-size:10.5px;line-height:10.5px;color:#333;white-space:nowrap;left:928.30px;letter-spacing:-0.188px;">Массив, копирование</span><svg style="position:absolute;left:1035.20px;top:130.50px;" width="4" height="9" viewBox="0 0 4 9"><rect x="0" y="0" width="1.2" height="1.2" fill="#333"/><rect x="0" y="2.5" width="1.2" height="1.2" fill="#333"/><rect x="0" y="5" width="1.2" height="1.2" fill="#333"/><rect x="0" y="7.5" width="1.2" height="1.2" fill="#333"/><rect x="2.6" y="0" width="1.2" height="1.2" fill="#333"/><rect x="2.6" y="2.5" width="1.2" height="1.2" fill="#333"/><rect x="2.6" y="5" width="1.2" height="1.2" fill="#333"/><rect x="2.6" y="7.5" width="1.2" height="1.2" fill="#333"/></svg><div style="position:absolute;left:1042.8px;top:52px;width:1px;height:91px;background:#b4b4b4;"></div><svg style="position:absolute;left:1048.70px;top:56.00px;" width="16" height="16" viewBox="0 0 16 16"><path d="M6.4 0 V9.6 H16 M6.4 9.6 L0 16" fill="none" stroke="#1e1e1e" stroke-width="1.2" /><path d="M6.4 3.2 H12.4 V9.6 L9 12.8 H2.6 V7 Z M2.6 12.8 L6.4 9.6" fill="none" stroke="#1e1e1e" stroke-width="1.2" /></svg><svg style="position:absolute;left:1075.30px;top:56.00px;" width="16" height="16" viewBox="0 0 16 16"><path d="M6.7 3.6 V9.8 M2 9.8 H12.6" fill="none" stroke="#1e1e1e" stroke-width="1.2" /><circle cx="6.7" cy="2" r="1.6" fill="#f1f1f1" stroke="#1e1e1e" stroke-width="1"/><circle cx="14.2" cy="10" r="1.6" fill="#f1f1f1" stroke="#1e1e1e" stroke-width="1"/><path d="M10.4 1.4 H12.6 L13.2 2 H16 V5.8 H10.4 Z" fill="#1e1e1e" /><path d="M0.7 10.4 H6.2 V15.4 H0.7 Z" fill="#f1f1f1" stroke="#1e1e1e" stroke-width="1.3" /><path d="M4.4 12 A1.3 1.3 0 1 0 4.4 13.8 V13 H3.6" fill="none" stroke="#1e1e1e" stroke-width="0.9" /></svg><svg style="position:absolute;left:1048.70px;top:81.00px;" width="16" height="16" viewBox="0 0 16 16"><path d="M0 4.7 L5 0 H16 L11 4.7 Z" fill="#1e1e1e" /><path d="M1.6 15.2 L5.4 11.6 H14.4 L10.6 15.2 Z" fill="none" stroke="#1e1e1e" stroke-width="1.3" /><path d="M19 17.6 L19 12.200000000000001 L13.6 17.6 Z" fill="#1e1e1e"/></svg><svg style="position:absolute;left:1075.30px;top:81.00px;" width="16" height="16" viewBox="0 0 16 16"><path d="M8.4 0 H14 V3.8 H16 V9.8 H12.6 V7 H6 V4.2 H8.4 Z" fill="#1e1e1e" /><path d="M8.6 3 L11.2 5.6 L13.8 3 V4.4 L11.2 7 L8.6 4.4 Z" fill="#f1f1f1" /><path d="M0.7 7.6 H12.4 V15.3 H0.7 Z" fill="#f1f1f1" stroke="#1e1e1e" stroke-width="1.4" /><ellipse cx="5.6" cy="11.4" rx="1.9" ry="2.4" fill="none" stroke="#1e1e1e" stroke-width="1.3"/><path d="M19 17.6 L19 12.200000000000001 L13.6 17.6 Z" fill="#1e1e1e"/></svg><svg style="position:absolute;left:1048.70px;top:106.00px;" width="16" height="16" viewBox="0 0 16 16"><path d="M0 15.6 L16 0.4" fill="none" stroke="#1e1e1e" stroke-width="1.3" /><circle cx="5" cy="10.9" r="1.7" fill="#f1f1f1" stroke="#1e1e1e" stroke-width="1"/><circle cx="11" cy="5.2" r="1.7" fill="#f1f1f1" stroke="#1e1e1e" stroke-width="1"/><path d="M19 17.6 L19 12.200000000000001 L13.6 17.6 Z" fill="#1e1e1e"/></svg><span style="position:absolute;top:131.00px;font-size:10.5px;line-height:10.5px;color:#333;white-space:nowrap;left:1047.70px;letter-spacing:-0.493px;">Вспом...</span><svg style="position:absolute;left:1088.50px;top:130.50px;" width="4" height="9" viewBox="0 0 4 9"><rect x="0" y="0" width="1.2" height="1.2" fill="#333"/><rect x="0" y="2.5" width="1.2" height="1.2" fill="#333"/><rect x="0" y="5" width="1.2" height="1.2" fill="#333"/><rect x="0" y="7.5" width="1.2" height="1.2" fill="#333"/><rect x="2.6" y="0" width="1.2" height="1.2" fill="#333"/><rect x="2.6" y="2.5" width="1.2" height="1.2" fill="#333"/><rect x="2.6" y="5" width="1.2" height="1.2" fill="#333"/><rect x="2.6" y="7.5" width="1.2" height="1.2" fill="#333"/></svg><div style="position:absolute;left:1095.5px;top:52px;width:1px;height:91px;background:#b4b4b4;"></div><svg style="position:absolute;left:1102.00px;top:56.00px;" width="16" height="16" viewBox="0 0 16 16"><path d="M0.6 0 V16 H12.4 M15.4 0 V10" fill="none" stroke="#1e1e1e" stroke-width="1.3" /><path d="M0.6 2.4 H15.4 M3.4 1 V3.8 M12.6 1 V3.8" fill="none" stroke="#1e1e1e" stroke-width="1.1" /><path d="M0.6 11.6 L3.8 9 H16 V12.6 L12.4 16 V11.6 Z" fill="#1e1e1e" /><path d="M0.6 11.8 H12.4" fill="none" stroke="#1e1e1e" stroke-width="1" /></svg><svg style="position:absolute;left:1128.00px;top:56.00px;" width="16" height="16" viewBox="0 0 16 16"><path d="M0.6 9 V11.6 C0.6 16.6 15.4 16.6 15.4 11.6 V9" fill="none" stroke="#1e1e1e" stroke-width="1.3" /><ellipse cx="8" cy="8.8" rx="7.6" ry="3.6" fill="#1e1e1e"/><path d="M3.6 11.2 L12 5.2" fill="none" stroke="#f1f1f1" stroke-width="1.2" /><path d="M11.2 5.8 L12.8 4.4" fill="none" stroke="#1e1e1e" stroke-width="1.2" /><circle cx="13" cy="2.8" r="2.4" fill="#f1f1f1" stroke="#1e1e1e" stroke-width="1.1"/><path d="M11.4 4.8 L14.8 0.6" fill="none" stroke="#1e1e1e" stroke-width="1.1" /></svg><svg style="position:absolute;left:1102.00px;top:81.00px;" width="16" height="16" viewBox="0 0 16 16"><path d="M0.4 4.4 C0.4 -1.4 15.6 -1.4 15.6 4.4 C15.6 5.8 14 6.6 12.4 7.2 L8 3.6 L3.6 7.2 C2 6.6 0.4 5.8 0.4 4.4 Z" fill="#1e1e1e" /><path d="M0.8 4.6 V8.4 C1.4 11 4 11.4 5 11.6 M15.2 4.6 V8.4 C14.6 11 12 11.4 11 11.6 M4 14.4 C6 16 10 16 12 14.4" fill="none" stroke="#1e1e1e" stroke-width="1.2" /><path d="M0.4 15.2 L8 7.8 L15.6 15.2" fill="none" stroke="#1e1e1e" stroke-width="1.3" /><path d="M4.2 7 V9.6 M6.4 5.4 V8.6 M9.6 5.4 V8.6 M11.8 7 V9.6" fill="none" stroke="#f1f1f1" stroke-width="0.9" /></svg><svg style="position:absolute;left:1128.00px;top:81.00px;" width="16" height="16" viewBox="0 0 16 16"><path d="M0.6 9 V11.6 C0.6 16.6 15.4 16.6 15.4 11.6 V9" fill="none" stroke="#1e1e1e" stroke-width="1.3" /><ellipse cx="8" cy="8.8" rx="7.6" ry="3.6" fill="#1e1e1e"/><path d="M7.6 8.6 L11.4 5.6" fill="none" stroke="#f1f1f1" stroke-width="1.2" /><path d="M11 6 L12.6 4" fill="none" stroke="#1e1e1e" stroke-width="1.2" /><path d="M11.8 5.2 V0.6 H13.4 C15.2 0.6 15.2 3 13.4 3 H11.8 M13.4 3 L15.2 5.2" fill="none" stroke="#1e1e1e" stroke-width="1.1" /></svg><svg style="position:absolute;left:1102.00px;top:106.00px;" width="16" height="16" viewBox="0 0 16 16"><path d="M1 0.8 H11 M2.6 0 V2 M9.4 0 V2 M10.6 0.4 V5" fill="none" stroke="#1e1e1e" stroke-width="1" /><path d="M0.8 5 H15.6 M0.8 5 V15.4 H15.6 M10.4 5 V15.4 M12.2 5 V15.4" fill="none" stroke="#1e1e1e" stroke-width="1.4" /><path d="M0.8 8 H10.4" fill="none" stroke="#1e1e1e" stroke-width="1.1" /><path d="M3.8 8.6 C3.8 13 6.6 13.6 8.6 13.6 M5.4 8.6 L8.4 12" fill="none" stroke="#1e1e1e" stroke-width="1.3" /><path d="M14.4 6.4 V14.6 M13.6 8 L14.4 6.4 L15.2 8 M13.6 13 L14.4 14.6 L15.2 13" fill="none" stroke="#1e1e1e" stroke-width="0.9" /></svg><svg style="position:absolute;left:1128.00px;top:106.00px;" width="16" height="16" viewBox="0 0 16 16"><path d="M6.4 0.4 C3.6 0.6 2 2.4 1.6 4.6 M0.4 3.6 L1.8 5 L3.6 4" fill="none" stroke="#1e1e1e" stroke-width="1.2" /><path d="M7.8 0 V5.4 L15.4 11 V15.8 L7.8 10.6 L1 7.4 M7.8 5.4 L1 7.4 M7.8 10.6 V5.4 M15.4 15.8 L7.4 14.8 L1.6 9.4" fill="none" stroke="#1e1e1e" stroke-width="1.2" /><path d="M9.4 2.4 L14.6 6.4 M9.6 3.8 L9.4 2.4 L10.8 2.4 M14.4 5 L14.6 6.4 L13.2 6.4" fill="none" stroke="#1e1e1e" stroke-width="1" /></svg><span style="position:absolute;top:131.00px;font-size:10.5px;line-height:10.5px;color:#333;white-space:nowrap;left:1100.70px;letter-spacing:-0.800px;">Раз...</span><svg style="position:absolute;left:1125.30px;top:133.70px;" width="9.4" height="4.6" viewBox="0 0 9.4 4.6"><path d="M0 0 H9.4 L4.7 4.6 Z" fill="#1e1e1e" /></svg><svg style="position:absolute;left:1141.80px;top:130.50px;" width="4" height="9" viewBox="0 0 4 9"><rect x="0" y="0" width="1.2" height="1.2" fill="#333"/><rect x="0" y="2.5" width="1.2" height="1.2" fill="#333"/><rect x="0" y="5" width="1.2" height="1.2" fill="#333"/><rect x="0" y="7.5" width="1.2" height="1.2" fill="#333"/><rect x="2.6" y="0" width="1.2" height="1.2" fill="#333"/><rect x="2.6" y="2.5" width="1.2" height="1.2" fill="#333"/><rect x="2.6" y="5" width="1.2" height="1.2" fill="#333"/><rect x="2.6" y="7.5" width="1.2" height="1.2" fill="#333"/></svg><div style="position:absolute;left:1148.5px;top:52px;width:1px;height:91px;background:#b4b4b4;"></div><svg style="position:absolute;left:1154.70px;top:56.00px;" width="16" height="16" viewBox="0 0 16 16"><path d="M2 10.4 L11.4 1 C12.6 -0.2 16.4 3.2 15.2 4.8 L5.8 14.2" fill="#f1f1f1" stroke="#1e1e1e" stroke-width="1.3" /><path d="M8.6 3.8 L11.4 1 C12.6 -0.2 16.4 3.2 15.2 4.8 L12.4 7.6 C12.4 5.6 10.6 3.8 8.6 3.8 Z" fill="#1e1e1e" /><ellipse cx="3.9" cy="12.2" rx="3" ry="2.6" fill="#f1f1f1" stroke="#1e1e1e" stroke-width="1.3" transform="rotate(-45 3.9 12.2)"/><path d="M5.4 7.4 C7 7.6 8.8 9.4 8.8 10.8 M7 5.8 C8.6 6 10.4 7.8 10.4 9.2" fill="none" stroke="#1e1e1e" stroke-width="1.4" /><path d="M10 3.4 C11.4 3.6 13 5.2 13.2 6.4" fill="none" stroke="#f1f1f1" stroke-width="0.9" /></svg><svg style="position:absolute;left:1180.30px;top:56.00px;" width="16" height="16" viewBox="0 0 16 16"><path d="M4 3 H12.6 C15 3 15 13 12.6 13 H4" fill="none" stroke="#1e1e1e" stroke-width="1.5" /><ellipse cx="4" cy="8" rx="2.4" ry="5" fill="none" stroke="#1e1e1e" stroke-width="1.7"/><path d="M0 8 H5 M6.6 8 H9 M10.4 8 H16" fill="none" stroke="#1e1e1e" stroke-width="1.2" /></svg><svg style="position:absolute;left:1207.00px;top:56.00px;" width="16" height="16" viewBox="0 0 16 16"><path d="M0 13.6 L4.4 10.2 H16 V12.4 L12.6 15.8 H0 Z" fill="#1e1e1e" /><path d="M0.8 14.1 H12.2" fill="none" stroke="#f1f1f1" stroke-width="0.9" /><path d="M6.6 12.4 L10.8 0.6 H16" fill="none" stroke="#1e1e1e" stroke-width="1.2" /><path d="M5.6 10.6 L6.4 13 L8.4 11.4" fill="none" stroke="#f1f1f1" stroke-width="1.1" /></svg><svg style="position:absolute;left:1154.70px;top:81.00px;" width="16" height="16" viewBox="0 0 16 16"><path d="M0 13.6 L4.4 10.2 H16 V12.4 L12.6 15.8 H0 Z" fill="#1e1e1e" /><path d="M0.8 14.1 H12.2" fill="none" stroke="#f1f1f1" stroke-width="0.9" /><path d="M6.4 12.4 L9.6 0.4" fill="none" stroke="#1e1e1e" stroke-width="1.2" /><path d="M15.8 0.8 H10.8 V6.6 H15.8 M10.8 3.7 H15" fill="none" stroke="#1e1e1e" stroke-width="1.3" /><path d="M5.6 10.6 L6.4 13 L8.4 11.4" fill="none" stroke="#f1f1f1" stroke-width="1.1" /></svg><svg style="position:absolute;left:1180.30px;top:81.00px;" width="16" height="16" viewBox="0 0 16 16"><path d="M0 13.6 L4.4 10.2 H16 V12.4 L12.6 15.8 H0 Z" fill="#1e1e1e" /><path d="M0.8 14.1 H12.2" fill="none" stroke="#f1f1f1" stroke-width="0.9" /><path d="M3.4 7.2 H9.4 L6.8 12 Z" fill="#f1f1f1" stroke="#1e1e1e" stroke-width="1.1" /><path d="M6.8 12.4 L15.6 0.2" fill="none" stroke="#1e1e1e" stroke-width="1.3" /></svg><svg style="position:absolute;left:1207.00px;top:81.00px;" width="16" height="16" viewBox="0 0 16 16"><path d="M0 13.6 L4.4 10.2 H16 V12.4 L12.6 15.8 H0 Z" fill="#1e1e1e" /><path d="M0.8 14.1 H12.2" fill="none" stroke="#f1f1f1" stroke-width="0.9" /><path d="M3.4 0.6 H9.6 V7 H3.4 Z" fill="#f1f1f1" stroke="#1e1e1e" stroke-width="1.2" /><path d="M6.5 7 V12" fill="none" stroke="#1e1e1e" stroke-width="1.2" /><path d="M4.4 12 H8.8" fill="none" stroke="#f1f1f1" stroke-width="1.2" /><path d="M5 5.6 L6.5 1.8 L8 5.6 M5.6 4.4 H7.4" fill="none" stroke="#1e1e1e" stroke-width="0.8" /></svg><svg style="position:absolute;left:1154.70px;top:106.00px;" width="16" height="16" viewBox="0 0 16 16"><path d="M0 13.6 L4.4 10.2 H16 V12.4 L12.6 15.8 H0 Z" fill="#1e1e1e" /><path d="M0.8 14.1 H12.2" fill="none" stroke="#f1f1f1" stroke-width="0.9" /><path d="M6.6 12 V0.7 H15.6 V5.2 H6.6 M9 0.7 V5.2 M11.4 0.7 V5.2 M13.6 0.7 V5.2" fill="none" stroke="#1e1e1e" stroke-width="1.2" /><path d="M4 12.2 H9.4" fill="none" stroke="#f1f1f1" stroke-width="1.1" /></svg><svg style="position:absolute;left:1180.30px;top:106.00px;" width="16" height="16" viewBox="0 0 16 16"><path d="M0 13.6 L4.4 10.2 H16 V12.4 L12.6 15.8 H0 Z" fill="#1e1e1e" /><path d="M0.8 14.1 H12.2" fill="none" stroke="#f1f1f1" stroke-width="0.9" /><path d="M8.6 0.6 L13 6 H4.2 Z" fill="#f1f1f1" stroke="#1e1e1e" stroke-width="1" /><path d="M4 7.4 H13.6 M8.6 7.4 V12.4" fill="none" stroke="#1e1e1e" stroke-width="1.1" /><path d="M8.6 3 V4.8" fill="none" stroke="#1e1e1e" stroke-width="1" /><path d="M7.4 10 L8.6 12.6 L10 10.6" fill="none" stroke="#f1f1f1" stroke-width="1" /><path d="M19 17.6 L19 12.200000000000001 L13.6 17.6 Z" fill="#1e1e1e"/></svg><span style="position:absolute;top:131.00px;font-size:10.5px;line-height:10.5px;color:#333;white-space:nowrap;left:1153.30px;letter-spacing:-0.240px;">Обозначения</span><svg style="position:absolute;left:1221.20px;top:130.50px;" width="4" height="9" viewBox="0 0 4 9"><rect x="0" y="0" width="1.2" height="1.2" fill="#333"/><rect x="0" y="2.5" width="1.2" height="1.2" fill="#333"/><rect x="0" y="5" width="1.2" height="1.2" fill="#333"/><rect x="0" y="7.5" width="1.2" height="1.2" fill="#333"/><rect x="2.6" y="0" width="1.2" height="1.2" fill="#333"/><rect x="2.6" y="2.5" width="1.2" height="1.2" fill="#333"/><rect x="2.6" y="5" width="1.2" height="1.2" fill="#333"/><rect x="2.6" y="7.5" width="1.2" height="1.2" fill="#333"/></svg><div style="position:absolute;left:1227.8px;top:52px;width:1px;height:91px;background:#b4b4b4;"></div><svg style="position:absolute;left:1233.50px;top:56.00px;" width="16" height="16" viewBox="0 0 16 16"><path d="M1 0.6 L5.6 7.6 M1.2 6.6 L5.8 8 L5.4 3.2" fill="none" stroke="#1e1e1e" stroke-width="1.3" /><path d="M0.6 15.4 L4.4 9.6 M7 9.4 H9.6 M11.6 9.4 H13.4 M14.6 11.6 L12 15.4 H0.6" fill="none" stroke="#1e1e1e" stroke-width="1.2" /><path d="M11.6 2.2 C11.6 -0.2 15.2 0 15.2 2 C15.2 3.6 13.4 3.8 13.4 5.8" fill="none" stroke="#1e1e1e" stroke-width="1.2" /><rect x="12.8" y="7.2" width="1.20" height="1.20" fill="#1e1e1e"/></svg><span style="position:absolute;top:53.00px;font-size:12px;line-height:12px;color:#1e1e1e;white-space:nowrap;left:1255.00px;letter-spacing:0.028px;">Информация об</span><span style="position:absolute;top:64.00px;font-size:12px;line-height:12px;color:#1e1e1e;white-space:nowrap;left:1255.00px;letter-spacing:-0.125px;">объекте</span><svg style="position:absolute;left:1233.50px;top:81.00px;" width="16" height="16" viewBox="0 0 16 16"><path d="M0 3.8 L3.6 0 H10.4 V3.6 H16 V12.2 L12.4 16 H0 Z" fill="#1e1e1e" /><path d="M1.1 4.9 H6.8 V8.8 H11.4 V14.9 H1.1 Z" fill="#f1f1f1" /></svg><span style="position:absolute;top:83.00px;font-size:12px;line-height:12px;color:#1e1e1e;white-space:nowrap;left:1255.00px;letter-spacing:-0.018px;">МЦХ модели</span><svg style="position:absolute;left:1233.50px;top:108.00px;" width="16" height="12" viewBox="0 0 16 12"><path d="M0.6 7.6 C2.4 4 3.6 0.8 6.2 0.8 C9 0.8 9.6 6.8 15.4 8" fill="none" stroke="#3a3a3a" stroke-width="0.9" /><path d="M2 10.4 C3.6 8.4 4.6 6 6.2 6 C8.4 6 9 9.8 15 9.8" fill="none" stroke="#2a2a2a" stroke-width="1" /><path d="M2 10.4 L0.6 7.6 M3.4 8.6 L2.4 4.6 M4.6 6.8 L4.2 2 M6 6 L6.2 0.8 M7.4 6.6 L8 1.8 M8.6 7.8 L9.6 3.6 M10 8.8 L11.4 5.6 M12 9.4 L13.4 7.2 M15 9.8 L15.4 8" fill="none" stroke="#666" stroke-width="0.55" /><path d="M19 15.6 L19 10.2 L13.6 15.6 Z" fill="#1e1e1e"/></svg><span style="position:absolute;top:103.00px;font-size:12px;line-height:12px;color:#1e1e1e;white-space:nowrap;left:1255.00px;letter-spacing:-0.060px;">График</span><span style="position:absolute;top:114.00px;font-size:12px;line-height:12px;color:#1e1e1e;white-space:nowrap;left:1255.00px;letter-spacing:0.119px;">кривизны</span><svg style="position:absolute;left:1354.30px;top:56.00px;" width="16" height="16" viewBox="0 0 16 16"><path d="M0.8 6.4 L7.6 3.6 M4 4 L7 11.6 M5.4 10.4 L8.2 10.6" fill="none" stroke="#1e1e1e" stroke-width="1.1" /><path d="M0.6 15.4 L4.2 10.2 M9.6 9.4 H11 M12.6 9.4 H13.6 M14.6 11.6 L12 15.4 H0.6" fill="none" stroke="#1e1e1e" stroke-width="1.2" /><path d="M11.6 2.2 C11.6 -0.2 15.2 0 15.2 2 C15.2 3.6 13.4 3.8 13.4 5.8" fill="none" stroke="#1e1e1e" stroke-width="1.2" /><rect x="12.8" y="7.2" width="1.20" height="1.20" fill="#1e1e1e"/><path d="M19 17.6 L19 12.200000000000001 L13.6 17.6 Z" fill="#1e1e1e"/></svg><span style="position:absolute;top:53.00px;font-size:12px;line-height:12px;color:#1e1e1e;white-space:nowrap;left:1375.70px;letter-spacing:-0.260px;">Расстояние и</span><span style="position:absolute;top:64.00px;font-size:12px;line-height:12px;color:#1e1e1e;white-space:nowrap;left:1375.70px;letter-spacing:-0.800px;">угол</span><svg style="position:absolute;left:1354.30px;top:81.00px;" width="16" height="16" viewBox="0 0 16 16"><path d="M0 10.4 L3.4 6.8 H4.4 V2.6 L6.6 0 H14 V6.8 H16 V12.4 L12.6 16 H0 Z" fill="#1e1e1e" /><rect x="5.6" y="3.2" width="5.00" height="6.20" fill="#f1f1f1"/><path d="M1.1 11.4 H4.4 V12.8 H10.6 V11.4 H11.6 V14.9 H1.1 Z" fill="#f1f1f1" /></svg><span style="position:absolute;top:78.00px;font-size:12px;line-height:12px;color:#1e1e1e;white-space:nowrap;left:1375.70px;letter-spacing:-0.164px;">Проверка</span><span style="position:absolute;top:89.00px;font-size:12px;line-height:12px;color:#1e1e1e;white-space:nowrap;left:1375.70px;letter-spacing:0.025px;">коллизий</span><svg style="position:absolute;left:1354.30px;top:106.00px;" width="16" height="16" viewBox="0 0 16 16"><path d="M0.8 0.4 C1 5 2 8.6 4.2 10.4 M5.8 11.6 C8 13.4 11 14.4 15 14.6" fill="none" stroke="#1e1e1e" stroke-width="1.1" /><circle cx="4.8" cy="10.8" r="1.2" fill="#f1f1f1" stroke="#1e1e1e" stroke-width="1"/><path d="M9 3.4 C7.6 1.6 4.4 2.4 4.4 5.2 C4.4 8 7.8 8.6 9.2 7 V5.4 H7.2" fill="none" stroke="#1e1e1e" stroke-width="1.2" /><path d="M11.4 2.6 C11.4 0.2 15 0.4 15 2.4 C15 4 13.2 4.2 13.2 6" fill="none" stroke="#1e1e1e" stroke-width="1.2" /><rect x="12.6" y="7.6" width="1.20" height="1.20" fill="#1e1e1e"/></svg><span style="position:absolute;top:103.00px;font-size:12px;line-height:12px;color:#1e1e1e;white-space:nowrap;left:1375.70px;letter-spacing:-0.164px;">Проверка</span><span style="position:absolute;top:114.00px;font-size:12px;line-height:12px;color:#1e1e1e;white-space:nowrap;left:1375.70px;letter-spacing:-0.027px;">непрерывности</span><span style="position:absolute;top:131.00px;font-size:10.5px;line-height:10.5px;color:#333;white-space:nowrap;left:1315.00px;letter-spacing:-0.188px;">Диагностика</span><svg style="position:absolute;left:1461.50px;top:130.50px;" width="4" height="9" viewBox="0 0 4 9"><rect x="0" y="0" width="1.2" height="1.2" fill="#333"/><rect x="0" y="2.5" width="1.2" height="1.2" fill="#333"/><rect x="0" y="5" width="1.2" height="1.2" fill="#333"/><rect x="0" y="7.5" width="1.2" height="1.2" fill="#333"/><rect x="2.6" y="0" width="1.2" height="1.2" fill="#333"/><rect x="2.6" y="2.5" width="1.2" height="1.2" fill="#333"/><rect x="2.6" y="5" width="1.2" height="1.2" fill="#333"/><rect x="2.6" y="7.5" width="1.2" height="1.2" fill="#333"/></svg><div style="position:absolute;left:1468.8px;top:52px;width:1px;height:91px;background:#b4b4b4;"></div><svg style="position:absolute;left:1475.30px;top:56.00px;" width="16" height="16" viewBox="0 0 16 16"><path d="M0.7 6 V15.3 H15.3 V8" fill="none" stroke="#1e1e1e" stroke-width="1.4" /><path d="M2.8 8.6 H6.4 V12 H2.8 Z" fill="none" stroke="#1e1e1e" stroke-width="1.2" /><path d="M8.6 11.2 H15.3 M8.6 11.2 V15.3 M8.6 13.2 H15.3" fill="none" stroke="#1e1e1e" stroke-width="1.2" /><path d="M9.4 0 H16 V7.2 H14.6 V1.4 H9.4 Z" fill="#1e1e1e" /><path d="M9.2 1.8 H14.4 V7.2 H9.2 Z" fill="#f1f1f1" stroke="#1e1e1e" stroke-width="1.3" /><path d="M7 1.4 C5 1.6 3.8 3 3.8 5.4 M2.4 4.2 L3.8 5.8 L5.6 4.6" fill="none" stroke="#1e1e1e" stroke-width="1.2" /></svg><span style="position:absolute;top:53.00px;font-size:12px;line-height:12px;color:#1e1e1e;white-space:nowrap;left:1496.70px;letter-spacing:-0.200px;">Создать чертеж</span><span style="position:absolute;top:64.00px;font-size:12px;line-height:12px;color:#1e1e1e;white-space:nowrap;left:1496.70px;letter-spacing:-0.070px;">по модели</span><svg style="position:absolute;left:1475.30px;top:81.00px;" width="16" height="16" viewBox="0 0 16 16"><path d="M7.6 5.4 H0.7 V15.3 H15.3 V7.6" fill="none" stroke="#1e1e1e" stroke-width="1.4" /><path d="M2.6 7.8 H8.4 V10 H2.6 Z" fill="none" stroke="#1e1e1e" stroke-width="1.1" /><path d="M9.4 11.4 H15.3 M9.4 11.4 V15.3 M9.4 13.4 H15.3" fill="none" stroke="#1e1e1e" stroke-width="1.2" /><path d="M10.4 0.2 H12.6 L13.2 1 H16 V4.6 H10.4 Z" fill="#1e1e1e" /></svg><span style="position:absolute;top:78.00px;font-size:12px;line-height:12px;color:#1e1e1e;white-space:nowrap;left:1496.70px;letter-spacing:-0.124px;">Управление</span><span style="position:absolute;top:89.00px;font-size:12px;line-height:12px;color:#1e1e1e;white-space:nowrap;left:1496.70px;letter-spacing:-0.125px;">связанными ч...</span><span style="position:absolute;top:131.00px;font-size:10.5px;line-height:10.5px;color:#333;white-space:nowrap;left:1509.30px;letter-spacing:-0.378px;">Чертеж</span><svg style="position:absolute;left:1582.80px;top:130.50px;" width="4" height="9" viewBox="0 0 4 9"><rect x="0" y="0" width="1.2" height="1.2" fill="#333"/><rect x="0" y="2.5" width="1.2" height="1.2" fill="#333"/><rect x="0" y="5" width="1.2" height="1.2" fill="#333"/><rect x="0" y="7.5" width="1.2" height="1.2" fill="#333"/><rect x="2.6" y="0" width="1.2" height="1.2" fill="#333"/><rect x="2.6" y="2.5" width="1.2" height="1.2" fill="#333"/><rect x="2.6" y="5" width="1.2" height="1.2" fill="#333"/><rect x="2.6" y="7.5" width="1.2" height="1.2" fill="#333"/></svg><div style="position:absolute;left:1589.5px;top:52px;width:1px;height:91px;background:#b4b4b4;"></div><div style="position:absolute;left:0px;top:144.7px;width:26px;height:896px;background:#c9c9c9;"></div><div style="position:absolute;left:0px;top:144.7px;width:26px;height:25.3px;background:#4d4d4d;"></div><svg style="position:absolute;left:7.50px;top:149.00px;" width="11" height="16" viewBox="0 0 11 16"><path d="M1.5 2.6 V14.2 H7 M1.5 4.4 H7 M1.5 9.2 H7" fill="none" stroke="#fff" stroke-width="1.2" /><circle cx="1.5" cy="1.5" r="1.3" fill="#4d4d4d" stroke="#fff" stroke-width="1"/><circle cx="8.6" cy="4.4" r="1.3" fill="#4d4d4d" stroke="#fff" stroke-width="1"/><circle cx="8.6" cy="9.2" r="1.3" fill="#4d4d4d" stroke="#fff" stroke-width="1"/><circle cx="8.6" cy="14.2" r="1.3" fill="#4d4d4d" stroke="#fff" stroke-width="1"/></svg><div style="position:absolute;left:0px;top:170px;width:26px;height:75px;background:#f1f1f1;"></div><svg style="position:absolute;left:7.00px;top:174.00px;" width="12" height="16" viewBox="0 0 12 16"><path d="M0.7 0.7 H11.3 V15.3 H0.7 Z" fill="none" stroke="#1e1e1e" stroke-width="1.25" /><path d="M2.9 3 H5.3 V5.4 H2.9 Z" fill="none" stroke="#1e1e1e" stroke-width="0.9" /><path d="M7 4.2 H9.6 M7 8.2 H9.6 M7 12 H9.6" fill="none" stroke="#1e1e1e" stroke-width="1.1" /><path d="M2.6 7.8 L3.8 9 L5.6 7 M2.6 11.6 L3.8 12.8 L5.6 10.8" fill="none" stroke="#1e1e1e" stroke-width="1" /></svg><svg style="position:absolute;left:6.50px;top:198.50px;" width="13" height="17" viewBox="0 0 13 17"><text x="0.4" y="13" font-family="Liberation Serif" font-style="italic" font-size="16.5" fill="#1e1e1e">f</text><text x="5.8" y="16" font-family="Liberation Sans" font-size="12" fill="#1e1e1e">x</text></svg><svg style="position:absolute;left:5.00px;top:224.00px;" width="15" height="16" viewBox="0 0 15 16"><rect x="0" y="0.2" width="15" height="3.4" rx="1.4" fill="#1e1e1e"/><rect x="0" y="6.3" width="15" height="3.4" rx="1.4" fill="#1e1e1e"/><rect x="0" y="12.4" width="15" height="3.4" rx="1.4" fill="#1e1e1e"/></svg><div style="position:absolute;left:26px;top:144.7px;width:1px;height:896px;background:#6e6e6e;"></div><div style="position:absolute;left:337px;top:144.7px;width:1px;height:896px;background:#6e6e6e;"></div><div style="position:absolute;left:27px;top:144.7px;width:310px;height:17px;background:#c9c9c9;"></div><span style="position:absolute;top:147.00px;font-size:12px;line-height:12px;color:#333;white-space:nowrap;left:30.00px;letter-spacing:-0.312px;">Дерево</span><svg style="position:absolute;left:322.00px;top:146.80px;" width="13" height="13" viewBox="0 0 13 13"><circle cx="6.5" cy="6.5" r="3.4" fill="none" stroke="#1e1e1e" stroke-width="2"/><path d="M6.5 0.2 V2.6 M6.5 10.4 V12.8 M0.2 6.5 H2.6 M10.4 6.5 H12.8 M2 2 L3.8 3.8 M9.2 9.2 L11 11 M11 2 L9.2 3.8 M3.8 9.2 L2 11" fill="none" stroke="#1e1e1e" stroke-width="1.9" /></svg><div style="position:absolute;left:27px;top:160.7px;width:310px;height:1.3px;background:#5a5a5a;"></div><div style="position:absolute;left:27px;top:162px;width:310px;height:25.2px;background:#f1f1f1;"></div><div style="position:absolute;left:27px;top:162px;width:25.7px;height:25.2px;background:#4d4d4d;"></div><svg style="position:absolute;left:31.50px;top:166.00px;" width="17" height="16" viewBox="0 0 17 16"><path d="M1.5 2.6 V15 H6.4 M1.5 4.6 H5.2" fill="none" stroke="#fff" stroke-width="1.2" /><circle cx="1.6" cy="1.5" r="1.3" fill="#4d4d4d" stroke="#fff" stroke-width="1"/><text x="6" y="6.2" font-family="Liberation Sans" font-weight="bold" font-size="6.5" fill="#fff">1</text><text x="9.8" y="8.4" font-family="Liberation Sans" font-weight="bold" font-size="6.5" fill="#fff">11</text><text x="6" y="14.6" font-family="Liberation Sans" font-weight="bold" font-size="6.5" fill="#fff">2</text><text x="9.8" y="13.6" font-family="Liberation Sans" font-weight="bold" font-size="6.5" fill="#fff">12</text><path d="M6.4 9 V11" fill="none" stroke="#fff" stroke-width="1" /></svg><svg style="position:absolute;left:58.50px;top:166.00px;" width="13" height="16" viewBox="0 0 13 16"><path d="M1.6 2.4 V14.6 H6 M1.6 4.6 H6 M6.6 5.6 V11.2 H11 M6.6 7.6 H11" fill="none" stroke="#1e1e1e" stroke-width="1.2" /><circle cx="1.6" cy="1.5" r="1.2" fill="#f1f1f1" stroke="#1e1e1e" stroke-width="1"/><circle cx="6.6" cy="4.6" r="1.2" fill="#f1f1f1" stroke="#1e1e1e" stroke-width="1"/><circle cx="11.6" cy="7.6" r="1.2" fill="#f1f1f1" stroke="#1e1e1e" stroke-width="1"/><circle cx="11.6" cy="11.2" r="1.2" fill="#f1f1f1" stroke="#1e1e1e" stroke-width="1"/><circle cx="6.6" cy="14.6" r="1.2" fill="#f1f1f1" stroke="#1e1e1e" stroke-width="1"/></svg><svg style="position:absolute;left:83.35px;top:166.00px;" width="16.3" height="16" viewBox="0 0 16.3 16"><path d="M4.4 3.6 V0.7 H11.6 L15.6 4.6 V12.4 H11.4" fill="none" stroke="#1e1e1e" stroke-width="1.2" /><path d="M2.4 8 V3.8 H8.4 L11.6 7 V14 H8" fill="#f1f1f1" stroke="#1e1e1e" stroke-width="1.2" /><circle cx="10.6" cy="6.6" r="1.9" fill="none" stroke="#1e1e1e" stroke-width="1.1"/><circle cx="6.6" cy="9.4" r="1.9" fill="#f1f1f1" stroke="#1e1e1e" stroke-width="1.1"/><path d="M0.7 10 H6.4 V15.3 H0.7 Z" fill="#f1f1f1" stroke="#1e1e1e" stroke-width="1.2" /><circle cx="3.5" cy="12.6" r="1.3" fill="none" stroke="#1e1e1e" stroke-width="1"/></svg><svg style="position:absolute;left:110.00px;top:166.00px;" width="16" height="16" viewBox="0 0 16 16"><path d="M0.7 0.7 H15.3 V15.3 H0.7 Z" fill="none" stroke="#1e1e1e" stroke-width="1.3" stroke-dasharray="2 1.6"/><path d="M3.8 3.8 H12.2 V12.2 H3.8 Z" fill="none" stroke="#1e1e1e" stroke-width="1.3" stroke-dasharray="2 1.6"/></svg><div style="position:absolute;left:27px;top:187px;width:310px;height:1.3px;background:#1a1a1a;"></div><div style="position:absolute;left:27px;top:188.3px;width:26px;height:24.7px;background:#f1f1f1;"></div><div style="position:absolute;left:53px;top:188.3px;width:284px;height:24.7px;background:#fff;"></div><svg style="position:absolute;left:32.00px;top:192.30px;" width="16" height="16" viewBox="0 0 16 16"><path d="M0 0 H16 L9.6 8.6 V14.4 Q8 16.4 6.4 14.4 V8.6 Z" fill="#1e1e1e" /></svg><svg style="position:absolute;left:61.00px;top:194.00px;" width="12" height="12" viewBox="0 0 12 12"><circle cx="7.3" cy="4.7" r="3.7" fill="none" stroke="#9a9a9a" stroke-width="1.3"/><path d="M4.6 7.4 L0.8 11.2" fill="none" stroke="#9a9a9a" stroke-width="1.6" /></svg><span style="position:absolute;top:194.00px;font-size:12px;line-height:12px;color:#a8a8a8;white-space:nowrap;left:79.50px;letter-spacing:0.277px;">Поиск (Ctrl+/)</span><div style="position:absolute;left:27px;top:213px;width:310px;height:1.2px;background:#555;"></div><div style="position:absolute;left:27px;top:214.2px;width:52px;height:606px;background:#e9e9e9;"></div><div style="position:absolute;left:79px;top:214.2px;width:248px;height:606px;background:#f2f2f2;"></div><div style="position:absolute;left:327px;top:214.2px;width:10px;height:606px;background:#fbfbfb;"></div><div style="position:absolute;left:328.5px;top:356px;width:7px;height:231.5px;background:#c2c2c2;"></div><div style="position:absolute;left:27px;top:240.2px;width:52px;height:1px;background:#cfcfcf;"></div><div style="position:absolute;left:79px;top:240.2px;width:248px;height:1px;background:#e0e0e0;"></div><svg style="position:absolute;left:32.00px;top:219.80px;" width="16" height="15" viewBox="0 0 16 15"><path d="M0.6 7.5 C4 1.8 12 1.8 15.4 7.5 C12 13.2 4 13.2 0.6 7.5 Z" fill="#1e1e1e"/><circle cx="8" cy="7.5" r="3.6" fill="#ebebeb"/><circle cx="8" cy="7.5" r="1.8" fill="#1e1e1e"/><path d="M0 0 L16 15" fill="none" stroke="#1e1e1e" stroke-width="1.1" /></svg><svg style="position:absolute;left:60.00px;top:222.00px;" width="12" height="12" viewBox="0 0 12 12"><path d="M11.6 0.8 H7 C-1 0.8 -1 11.2 7 11.2 H11.6 M1.2 6 H11.6" fill="none" stroke="#1e1e1e" stroke-width="1.15" /></svg><svg style="position:absolute;left:113.00px;top:220.30px;" width="16" height="15.4" viewBox="0 0 16 15.4"><path d="M0.5 0.5 H7.3 V9.3 H15.5 V14.9 H0.5 Z" fill="#f7f7f7" stroke="#8c8c8c" stroke-width="1" /></svg><span style="position:absolute;top:222.00px;font-size:11.5px;line-height:11.5px;color:#8f8f8f;white-space:nowrap;left:131.80px;letter-spacing:-0.3px;">(<b style="color:#6e6e6e">−</b>)</span><span style="position:absolute;top:223.00px;font-size:12px;line-height:12px;color:#8a8a8a;white-space:nowrap;left:146.20px;letter-spacing:-0.349px;">Эскиз:7</span><div style="position:absolute;left:27px;top:266.2px;width:52px;height:1px;background:#cfcfcf;"></div><div style="position:absolute;left:79px;top:266.2px;width:248px;height:1px;background:#e0e0e0;"></div><svg style="position:absolute;left:32.00px;top:245.80px;" width="16" height="15" viewBox="0 0 16 15"><path d="M0.6 7.5 C4 1.8 12 1.8 15.4 7.5 C12 13.2 4 13.2 0.6 7.5 Z" fill="#1e1e1e"/><circle cx="8" cy="7.5" r="3.6" fill="#ebebeb"/><circle cx="8" cy="7.5" r="1.8" fill="#1e1e1e"/></svg><svg style="position:absolute;left:60.00px;top:248.00px;" width="12" height="12" viewBox="0 0 12 12"><path d="M11.6 0.8 H7 C-1 0.8 -1 11.2 7 11.2 H11.6 M1.2 6 H11.6" fill="none" stroke="#1e1e1e" stroke-width="1.15" /></svg><svg style="position:absolute;left:113.00px;top:246.00px;" width="16" height="16" viewBox="0 0 16 16"><path d="M1.8 3 L4.8 0.2 H16 V11.6 L13.2 14.4 H1.8 Z" fill="#1e1e1e" /><rect x="3" y="3.1" width="10.00" height="10.30" fill="#f2f2f2"/><path d="M3 6 H10.2 V13.4 H8.4 V7.8 H3 Z" fill="#1e1e1e" /><path d="M0.7 9.4 H7 V15.3 H0.7 Z" fill="#f2f2f2" stroke="#1e1e1e" stroke-width="1.3" /></svg><span style="position:absolute;top:249.00px;font-size:12px;line-height:12px;color:#1e1e1e;white-space:nowrap;left:131.20px;letter-spacing:-0.239px;-webkit-text-stroke:0.22px #1e1e1e;">Элемент выдавливания:7</span><div style="position:absolute;left:27px;top:292.2px;width:52px;height:1px;background:#cfcfcf;"></div><div style="position:absolute;left:79px;top:292.2px;width:248px;height:1px;background:#e0e0e0;"></div><svg style="position:absolute;left:32.00px;top:271.80px;" width="16" height="15" viewBox="0 0 16 15"><path d="M0.6 7.5 C4 1.8 12 1.8 15.4 7.5 C12 13.2 4 13.2 0.6 7.5 Z" fill="#1e1e1e"/><circle cx="8" cy="7.5" r="3.6" fill="#ebebeb"/><circle cx="8" cy="7.5" r="1.8" fill="#1e1e1e"/><path d="M0 0 L16 15" fill="none" stroke="#1e1e1e" stroke-width="1.1" /></svg><svg style="position:absolute;left:60.00px;top:274.00px;" width="12" height="12" viewBox="0 0 12 12"><path d="M11.6 0.8 H7 C-1 0.8 -1 11.2 7 11.2 H11.6 M1.2 6 H11.6" fill="none" stroke="#1e1e1e" stroke-width="1.15" /></svg><svg style="position:absolute;left:113.00px;top:272.30px;" width="16" height="15.4" viewBox="0 0 16 15.4"><path d="M0.5 0.5 H7.3 V9.3 H15.5 V14.9 H0.5 Z" fill="#f7f7f7" stroke="#8c8c8c" stroke-width="1" /></svg><span style="position:absolute;top:274.00px;font-size:11.5px;line-height:11.5px;color:#8f8f8f;white-space:nowrap;left:131.80px;letter-spacing:-0.3px;">(<b style="color:#6e6e6e">−</b>)</span><span style="position:absolute;top:275.00px;font-size:12px;line-height:12px;color:#8a8a8a;white-space:nowrap;left:146.20px;letter-spacing:-0.349px;">Эскиз:8</span><div style="position:absolute;left:27px;top:318.2px;width:52px;height:1px;background:#cfcfcf;"></div><div style="position:absolute;left:79px;top:318.2px;width:248px;height:1px;background:#e0e0e0;"></div><svg style="position:absolute;left:32.00px;top:297.80px;" width="16" height="15" viewBox="0 0 16 15"><path d="M0.6 7.5 C4 1.8 12 1.8 15.4 7.5 C12 13.2 4 13.2 0.6 7.5 Z" fill="#1e1e1e"/><circle cx="8" cy="7.5" r="3.6" fill="#ebebeb"/><circle cx="8" cy="7.5" r="1.8" fill="#1e1e1e"/></svg><svg style="position:absolute;left:60.00px;top:300.00px;" width="12" height="12" viewBox="0 0 12 12"><path d="M11.6 0.8 H7 C-1 0.8 -1 11.2 7 11.2 H11.6 M1.2 6 H11.6" fill="none" stroke="#1e1e1e" stroke-width="1.15" /></svg><svg style="position:absolute;left:113.00px;top:298.00px;" width="16" height="16" viewBox="0 0 16 16"><path d="M1.8 3 L4.8 0.2 H16 V11.6 L13.2 14.4 H1.8 Z" fill="#1e1e1e" /><rect x="3" y="3.1" width="10.00" height="10.30" fill="#f2f2f2"/><path d="M3 6 H10.2 V13.4 H8.4 V7.8 H3 Z" fill="#1e1e1e" /><path d="M0.7 9.4 H7 V15.3 H0.7 Z" fill="#f2f2f2" stroke="#1e1e1e" stroke-width="1.3" /></svg><span style="position:absolute;top:301.00px;font-size:12px;line-height:12px;color:#1e1e1e;white-space:nowrap;left:131.20px;letter-spacing:-0.239px;-webkit-text-stroke:0.22px #1e1e1e;">Элемент выдавливания:8</span><div style="position:absolute;left:27px;top:344.2px;width:52px;height:1px;background:#cfcfcf;"></div><div style="position:absolute;left:79px;top:344.2px;width:248px;height:1px;background:#e0e0e0;"></div><svg style="position:absolute;left:60.00px;top:326.00px;" width="12" height="12" viewBox="0 0 12 12"><path d="M11.6 0.8 H7 C-1 0.8 -1 11.2 7 11.2 H11.6 M1.2 6 H11.6" fill="none" stroke="#1e1e1e" stroke-width="1.15" /></svg><svg style="position:absolute;left:113.00px;top:324.00px;" width="16" height="16" viewBox="0 0 16 16"><path d="M0.3 4.4 L4.3 0.3 H8.2 L16 7.6 V12 L12.4 15.8 H0.3 Z" fill="#1e1e1e" /><path d="M1.3 14.8 V5.1 L5.2 2.9 L11.6 10.7 V14.8 Z" fill="#f2f2f2" /><path d="M5.4 2 L7.8 0.5" fill="none" stroke="#f2f2f2" stroke-width="0.9" /><path d="M12.4 10.5 L15.8 8" fill="none" stroke="#f2f2f2" stroke-width="0.9" /></svg><span style="position:absolute;top:327.00px;font-size:12px;line-height:12px;color:#1e1e1e;white-space:nowrap;left:131.20px;letter-spacing:-0.417px;-webkit-text-stroke:0.22px #1e1e1e;">Фаска:1</span><div style="position:absolute;left:27px;top:370.2px;width:52px;height:1px;background:#cfcfcf;"></div><div style="position:absolute;left:79px;top:370.2px;width:248px;height:1px;background:#e0e0e0;"></div><svg style="position:absolute;left:60.00px;top:352.00px;" width="12" height="12" viewBox="0 0 12 12"><path d="M11.6 0.8 H7 C-1 0.8 -1 11.2 7 11.2 H11.6 M1.2 6 H11.6" fill="none" stroke="#1e1e1e" stroke-width="1.15" /></svg><svg style="position:absolute;left:113.00px;top:350.00px;" width="16" height="16" viewBox="0 0 16 16"><path d="M0.3 4.4 L4.3 0.3 H8.2 L16 7.6 V12 L12.4 15.8 H0.3 Z" fill="#1e1e1e" /><path d="M1.3 14.8 V5.1 L5.2 2.9 L11.6 10.7 V14.8 Z" fill="#f2f2f2" /><path d="M5.4 2 L7.8 0.5" fill="none" stroke="#f2f2f2" stroke-width="0.9" /><path d="M12.4 10.5 L15.8 8" fill="none" stroke="#f2f2f2" stroke-width="0.9" /></svg><span style="position:absolute;top:353.00px;font-size:12px;line-height:12px;color:#1e1e1e;white-space:nowrap;left:131.20px;letter-spacing:-0.417px;-webkit-text-stroke:0.22px #1e1e1e;">Фаска:2</span><div style="position:absolute;left:27px;top:396.2px;width:52px;height:1px;background:#cfcfcf;"></div><div style="position:absolute;left:79px;top:396.2px;width:248px;height:1px;background:#e0e0e0;"></div><svg style="position:absolute;left:60.00px;top:378.00px;" width="12" height="12" viewBox="0 0 12 12"><path d="M11.6 0.8 H7 C-1 0.8 -1 11.2 7 11.2 H11.6 M1.2 6 H11.6" fill="none" stroke="#1e1e1e" stroke-width="1.15" /></svg><svg style="position:absolute;left:113.00px;top:376.00px;" width="16" height="16" viewBox="0 0 16 16"><path d="M0 3.7 L3.4 0 H16 V12.1 L12.7 16 H0 Z" fill="#1e1e1e" /><rect x="1.1" y="3.1" width="11.80" height="11.80" fill="#f2f2f2"/><path d="M3.4 5 H11.3 V13 H3.4 Z" fill="#1e1e1e" /><rect x="6" y="6.4" width="4.30" height="4.00" fill="#f2f2f2"/></svg><span style="position:absolute;top:379.00px;font-size:12px;line-height:12px;color:#1e1e1e;white-space:nowrap;left:131.20px;letter-spacing:-0.281px;-webkit-text-stroke:0.22px #1e1e1e;">Элемент выдавливания:10</span><div style="position:absolute;left:27px;top:422.2px;width:52px;height:1px;background:#cfcfcf;"></div><div style="position:absolute;left:79px;top:422.2px;width:248px;height:1px;background:#e0e0e0;"></div><svg style="position:absolute;left:32.00px;top:401.80px;" width="16" height="15" viewBox="0 0 16 15"><path d="M0.6 7.5 C4 1.8 12 1.8 15.4 7.5 C12 13.2 4 13.2 0.6 7.5 Z" fill="#1e1e1e"/><circle cx="8" cy="7.5" r="3.6" fill="#ebebeb"/><circle cx="8" cy="7.5" r="1.8" fill="#1e1e1e"/><path d="M0 0 L16 15" fill="none" stroke="#1e1e1e" stroke-width="1.1" /></svg><svg style="position:absolute;left:60.00px;top:404.00px;" width="12" height="12" viewBox="0 0 12 12"><path d="M11.6 0.8 H7 C-1 0.8 -1 11.2 7 11.2 H11.6 M1.2 6 H11.6" fill="none" stroke="#1e1e1e" stroke-width="1.15" /></svg><svg style="position:absolute;left:113.00px;top:402.30px;" width="16" height="15.4" viewBox="0 0 16 15.4"><path d="M0.5 0.5 H7.3 V9.3 H15.5 V14.9 H0.5 Z" fill="#f7f7f7" stroke="#8c8c8c" stroke-width="1" /></svg><span style="position:absolute;top:404.00px;font-size:11.5px;line-height:11.5px;color:#8f8f8f;white-space:nowrap;left:131.80px;letter-spacing:-0.3px;">(<b style="color:#6e6e6e">+</b>)</span><span style="position:absolute;top:405.00px;font-size:12px;line-height:12px;color:#8a8a8a;white-space:nowrap;left:146.20px;letter-spacing:-0.395px;">Эскиз:10</span><div style="position:absolute;left:27px;top:448.2px;width:52px;height:1px;background:#cfcfcf;"></div><div style="position:absolute;left:79px;top:448.2px;width:248px;height:1px;background:#e0e0e0;"></div><svg style="position:absolute;left:60.00px;top:430.00px;" width="12" height="12" viewBox="0 0 12 12"><path d="M11.6 0.8 H7 C-1 0.8 -1 11.2 7 11.2 H11.6 M1.2 6 H11.6" fill="none" stroke="#1e1e1e" stroke-width="1.15" /></svg><svg style="position:absolute;left:113.00px;top:428.00px;" width="16" height="16" viewBox="0 0 16 16"><path d="M0 3.7 L3.4 0 H16 V12.1 L12.7 16 H0 Z" fill="#1e1e1e" /><rect x="1.1" y="3.1" width="11.80" height="11.80" fill="#f2f2f2"/><path d="M3.4 5 H11.3 V13 H3.4 Z" fill="#1e1e1e" /><rect x="6" y="6.4" width="4.30" height="4.00" fill="#f2f2f2"/></svg><span style="position:absolute;top:431.00px;font-size:12px;line-height:12px;color:#1e1e1e;white-space:nowrap;left:131.20px;letter-spacing:-0.263px;-webkit-text-stroke:0.22px #1e1e1e;">Элемент выдавливания:11</span><div style="position:absolute;left:27px;top:474.2px;width:52px;height:1px;background:#cfcfcf;"></div><div style="position:absolute;left:79px;top:474.2px;width:248px;height:1px;background:#e0e0e0;"></div><svg style="position:absolute;left:32.00px;top:453.80px;" width="16" height="15" viewBox="0 0 16 15"><path d="M0.6 7.5 C4 1.8 12 1.8 15.4 7.5 C12 13.2 4 13.2 0.6 7.5 Z" fill="#1e1e1e"/><circle cx="8" cy="7.5" r="3.6" fill="#ebebeb"/><circle cx="8" cy="7.5" r="1.8" fill="#1e1e1e"/><path d="M0 0 L16 15" fill="none" stroke="#1e1e1e" stroke-width="1.1" /></svg><svg style="position:absolute;left:60.00px;top:456.00px;" width="12" height="12" viewBox="0 0 12 12"><path d="M11.6 0.8 H7 C-1 0.8 -1 11.2 7 11.2 H11.6 M1.2 6 H11.6" fill="none" stroke="#1e1e1e" stroke-width="1.15" /></svg><svg style="position:absolute;left:113.00px;top:454.30px;" width="16" height="15.4" viewBox="0 0 16 15.4"><path d="M0.5 0.5 H7.3 V9.3 H15.5 V14.9 H0.5 Z" fill="#f7f7f7" stroke="#8c8c8c" stroke-width="1" /></svg><span style="position:absolute;top:456.00px;font-size:11.5px;line-height:11.5px;color:#8f8f8f;white-space:nowrap;left:131.80px;letter-spacing:-0.3px;">(<b style="color:#6e6e6e">−</b>)</span><span style="position:absolute;top:457.00px;font-size:12px;line-height:12px;color:#8a8a8a;white-space:nowrap;left:146.20px;letter-spacing:-0.339px;">Эскиз:11</span><div style="position:absolute;left:27px;top:500.2px;width:52px;height:1px;background:#cfcfcf;"></div><div style="position:absolute;left:79px;top:500.2px;width:248px;height:1px;background:#e0e0e0;"></div><svg style="position:absolute;left:32.00px;top:479.80px;" width="16" height="15" viewBox="0 0 16 15"><path d="M0.6 7.5 C4 1.8 12 1.8 15.4 7.5 C12 13.2 4 13.2 0.6 7.5 Z" fill="#1e1e1e"/><circle cx="8" cy="7.5" r="3.6" fill="#ebebeb"/><circle cx="8" cy="7.5" r="1.8" fill="#1e1e1e"/><path d="M0 0 L16 15" fill="none" stroke="#1e1e1e" stroke-width="1.1" /></svg><svg style="position:absolute;left:60.00px;top:482.00px;" width="12" height="12" viewBox="0 0 12 12"><path d="M11.6 0.8 H7 C-1 0.8 -1 11.2 7 11.2 H11.6 M1.2 6 H11.6" fill="none" stroke="#1e1e1e" stroke-width="1.15" /></svg><svg style="position:absolute;left:113.00px;top:480.30px;" width="16" height="15.4" viewBox="0 0 16 15.4"><path d="M0.5 0.5 H7.3 V9.3 H15.5 V14.9 H0.5 Z" fill="#f7f7f7" stroke="#8c8c8c" stroke-width="1" /></svg><span style="position:absolute;top:482.00px;font-size:11.5px;line-height:11.5px;color:#8f8f8f;white-space:nowrap;left:131.80px;letter-spacing:-0.3px;">(<b style="color:#6e6e6e">+</b>)</span><span style="position:absolute;top:483.00px;font-size:12px;line-height:12px;color:#8a8a8a;white-space:nowrap;left:146.20px;letter-spacing:-0.395px;">Эскиз:12</span><div style="position:absolute;left:27px;top:526.2px;width:52px;height:1px;background:#cfcfcf;"></div><div style="position:absolute;left:79px;top:526.2px;width:248px;height:1px;background:#e0e0e0;"></div><svg style="position:absolute;left:60.00px;top:508.00px;" width="12" height="12" viewBox="0 0 12 12"><path d="M11.6 0.8 H7 C-1 0.8 -1 11.2 7 11.2 H11.6 M1.2 6 H11.6" fill="none" stroke="#1e1e1e" stroke-width="1.15" /></svg><svg style="position:absolute;left:113.00px;top:506.00px;" width="16" height="16" viewBox="0 0 16 16"><path d="M0 3.7 L3.4 0 H16 V12.1 L12.7 16 H0 Z" fill="#1e1e1e" /><rect x="1.1" y="3.1" width="11.80" height="11.80" fill="#f2f2f2"/><path d="M3.4 5 H11.3 V13 H3.4 Z" fill="#1e1e1e" /><rect x="6" y="6.4" width="4.30" height="4.00" fill="#f2f2f2"/></svg><span style="position:absolute;top:509.00px;font-size:12px;line-height:12px;color:#1e1e1e;white-space:nowrap;left:131.20px;letter-spacing:-0.281px;-webkit-text-stroke:0.22px #1e1e1e;">Элемент выдавливания:12</span><div style="position:absolute;left:27px;top:552.2px;width:52px;height:1px;background:#cfcfcf;"></div><div style="position:absolute;left:79px;top:552.2px;width:248px;height:1px;background:#e0e0e0;"></div><svg style="position:absolute;left:32.00px;top:531.80px;" width="16" height="15" viewBox="0 0 16 15"><path d="M0.6 7.5 C4 1.8 12 1.8 15.4 7.5 C12 13.2 4 13.2 0.6 7.5 Z" fill="#1e1e1e"/><circle cx="8" cy="7.5" r="3.6" fill="#ebebeb"/><circle cx="8" cy="7.5" r="1.8" fill="#1e1e1e"/><path d="M0 0 L16 15" fill="none" stroke="#1e1e1e" stroke-width="1.1" /></svg><svg style="position:absolute;left:60.00px;top:534.00px;" width="12" height="12" viewBox="0 0 12 12"><path d="M11.6 0.8 H7 C-1 0.8 -1 11.2 7 11.2 H11.6 M1.2 6 H11.6" fill="none" stroke="#1e1e1e" stroke-width="1.15" /></svg><svg style="position:absolute;left:113.00px;top:532.30px;" width="16" height="15.4" viewBox="0 0 16 15.4"><path d="M0.5 0.5 H7.3 V9.3 H15.5 V14.9 H0.5 Z" fill="#f7f7f7" stroke="#8c8c8c" stroke-width="1" /></svg><span style="position:absolute;top:534.00px;font-size:11.5px;line-height:11.5px;color:#8f8f8f;white-space:nowrap;left:131.80px;letter-spacing:-0.3px;">(<b style="color:#6e6e6e">−</b>)</span><span style="position:absolute;top:535.00px;font-size:12px;line-height:12px;color:#8a8a8a;white-space:nowrap;left:146.20px;letter-spacing:-0.395px;">Эскиз:13</span><div style="position:absolute;left:27px;top:578.2px;width:52px;height:1px;background:#cfcfcf;"></div><div style="position:absolute;left:79px;top:578.2px;width:248px;height:1px;background:#e0e0e0;"></div><svg style="position:absolute;left:60.00px;top:560.00px;" width="12" height="12" viewBox="0 0 12 12"><path d="M11.6 0.8 H7 C-1 0.8 -1 11.2 7 11.2 H11.6 M1.2 6 H11.6" fill="none" stroke="#1e1e1e" stroke-width="1.15" /></svg><svg style="position:absolute;left:113.00px;top:558.00px;" width="16" height="16" viewBox="0 0 16 16"><path d="M0 3.7 L3.4 0 H16 V12.1 L12.7 16 H0 Z" fill="#1e1e1e" /><rect x="1.1" y="3.1" width="11.80" height="11.80" fill="#f2f2f2"/><path d="M3.4 5 H11.3 V13 H3.4 Z" fill="#1e1e1e" /><rect x="6" y="6.4" width="4.30" height="4.00" fill="#f2f2f2"/></svg><span style="position:absolute;top:561.00px;font-size:12px;line-height:12px;color:#1e1e1e;white-space:nowrap;left:131.20px;letter-spacing:-0.281px;-webkit-text-stroke:0.22px #1e1e1e;">Элемент выдавливания:13</span><div style="position:absolute;left:27px;top:604.2px;width:52px;height:1px;background:#cfcfcf;"></div><div style="position:absolute;left:79px;top:604.2px;width:248px;height:1px;background:#e0e0e0;"></div><svg style="position:absolute;left:32.00px;top:583.80px;" width="16" height="15" viewBox="0 0 16 15"><path d="M0.6 7.5 C4 1.8 12 1.8 15.4 7.5 C12 13.2 4 13.2 0.6 7.5 Z" fill="#1e1e1e"/><circle cx="8" cy="7.5" r="3.6" fill="#ebebeb"/><circle cx="8" cy="7.5" r="1.8" fill="#1e1e1e"/></svg><svg style="position:absolute;left:60.00px;top:586.00px;" width="12" height="12" viewBox="0 0 12 12"><path d="M11.6 0.8 H7 C-1 0.8 -1 11.2 7 11.2 H11.6 M1.2 6 H11.6" fill="none" stroke="#1e1e1e" stroke-width="1.15" /></svg><svg style="position:absolute;left:113.00px;top:584.00px;" width="16" height="16" viewBox="0 0 16 16"><path d="M1.8 3 L4.8 0.2 H16 V11.6 L13.2 14.4 H1.8 Z" fill="#1e1e1e" /><rect x="3" y="3.1" width="10.00" height="10.30" fill="#f2f2f2"/><path d="M3 6 H10.2 V13.4 H8.4 V7.8 H3 Z" fill="#1e1e1e" /><path d="M0.7 9.4 H7 V15.3 H0.7 Z" fill="#f2f2f2" stroke="#1e1e1e" stroke-width="1.3" /></svg><span style="position:absolute;top:587.00px;font-size:12px;line-height:12px;color:#1e1e1e;white-space:nowrap;left:131.20px;letter-spacing:-0.281px;-webkit-text-stroke:0.22px #1e1e1e;">Элемент выдавливания:14</span><div style="position:absolute;left:27px;top:630.2px;width:52px;height:1px;background:#cfcfcf;"></div><div style="position:absolute;left:79px;top:630.2px;width:248px;height:1px;background:#e0e0e0;"></div><svg style="position:absolute;left:32.00px;top:609.80px;" width="16" height="15" viewBox="0 0 16 15"><path d="M0.6 7.5 C4 1.8 12 1.8 15.4 7.5 C12 13.2 4 13.2 0.6 7.5 Z" fill="#1e1e1e"/><circle cx="8" cy="7.5" r="3.6" fill="#ebebeb"/><circle cx="8" cy="7.5" r="1.8" fill="#1e1e1e"/><path d="M0 0 L16 15" fill="none" stroke="#1e1e1e" stroke-width="1.1" /></svg><svg style="position:absolute;left:60.00px;top:612.00px;" width="12" height="12" viewBox="0 0 12 12"><path d="M11.6 0.8 H7 C-1 0.8 -1 11.2 7 11.2 H11.6 M1.2 6 H11.6" fill="none" stroke="#1e1e1e" stroke-width="1.15" /></svg><svg style="position:absolute;left:113.00px;top:610.30px;" width="16" height="15.4" viewBox="0 0 16 15.4"><path d="M0.5 0.5 H7.3 V9.3 H15.5 V14.9 H0.5 Z" fill="#f7f7f7" stroke="#8c8c8c" stroke-width="1" /></svg><span style="position:absolute;top:612.00px;font-size:11.5px;line-height:11.5px;color:#8f8f8f;white-space:nowrap;left:131.80px;letter-spacing:-0.3px;">(<b style="color:#6e6e6e">−</b>)</span><span style="position:absolute;top:613.00px;font-size:12px;line-height:12px;color:#8a8a8a;white-space:nowrap;left:146.20px;letter-spacing:-0.395px;">Эскиз:14</span><div style="position:absolute;left:27px;top:656.2px;width:52px;height:1px;background:#cfcfcf;"></div><div style="position:absolute;left:79px;top:656.2px;width:248px;height:1px;background:#e0e0e0;"></div><svg style="position:absolute;left:60.00px;top:638.00px;" width="12" height="12" viewBox="0 0 12 12"><path d="M11.6 0.8 H7 C-1 0.8 -1 11.2 7 11.2 H11.6 M1.2 6 H11.6" fill="none" stroke="#1e1e1e" stroke-width="1.15" /></svg><svg style="position:absolute;left:113.00px;top:636.00px;" width="16" height="16" viewBox="0 0 16 16"><path d="M0 3.7 L3.4 0 H16 V12.1 L12.7 16 H0 Z" fill="#1e1e1e" /><rect x="1.1" y="3.1" width="11.80" height="11.80" fill="#f2f2f2"/><path d="M3.4 5 H11.3 V13 H3.4 Z" fill="#1e1e1e" /><rect x="6" y="6.4" width="4.30" height="4.00" fill="#f2f2f2"/></svg><span style="position:absolute;top:639.00px;font-size:12px;line-height:12px;color:#1e1e1e;white-space:nowrap;left:131.20px;letter-spacing:-0.281px;-webkit-text-stroke:0.22px #1e1e1e;">Элемент выдавливания:15</span><div style="position:absolute;left:27px;top:682.2px;width:52px;height:1px;background:#cfcfcf;"></div><div style="position:absolute;left:79px;top:682.2px;width:248px;height:1px;background:#e0e0e0;"></div><svg style="position:absolute;left:60.00px;top:664.00px;" width="12" height="12" viewBox="0 0 12 12"><path d="M11.6 0.8 H7 C-1 0.8 -1 11.2 7 11.2 H11.6 M1.2 6 H11.6" fill="none" stroke="#1e1e1e" stroke-width="1.15" /></svg><svg style="position:absolute;left:113.00px;top:662.00px;" width="16" height="16" viewBox="0 0 16 16"><path d="M0 3.7 L3.4 0 H16 V12.1 L12.7 16 H0 Z" fill="#1e1e1e" /><rect x="1.1" y="3.1" width="11.80" height="11.80" fill="#f2f2f2"/><path d="M3.4 5 H11.3 V13 H3.4 Z" fill="#1e1e1e" /><rect x="6" y="6.4" width="4.30" height="4.00" fill="#f2f2f2"/></svg><span style="position:absolute;top:665.00px;font-size:12px;line-height:12px;color:#1e1e1e;white-space:nowrap;left:131.20px;letter-spacing:-0.281px;-webkit-text-stroke:0.22px #1e1e1e;">Элемент выдавливания:16</span><div style="position:absolute;left:27px;top:708.2px;width:52px;height:1px;background:#cfcfcf;"></div><div style="position:absolute;left:79px;top:708.2px;width:248px;height:1px;background:#e0e0e0;"></div><svg style="position:absolute;left:60.00px;top:690.00px;" width="12" height="12" viewBox="0 0 12 12"><path d="M11.6 0.8 H7 C-1 0.8 -1 11.2 7 11.2 H11.6 M1.2 6 H11.6" fill="none" stroke="#1e1e1e" stroke-width="1.15" /><path d="M-1.6 -2.4 L13.6 13" fill="none" stroke="#1e1e1e" stroke-width="1.05" /></svg><svg style="position:absolute;left:113.00px;top:688.30px;" width="16" height="15.4" viewBox="0 0 16 15.4"><path d="M0.5 0.5 H7.3 V9.3 H15.5 V14.9 H0.5 Z" fill="#f7f7f7" stroke="#8c8c8c" stroke-width="1" /></svg><span style="position:absolute;top:690.00px;font-size:11.5px;line-height:11.5px;color:#8f8f8f;white-space:nowrap;left:131.80px;letter-spacing:-0.3px;">(<b style="color:#6e6e6e">−</b>)</span><span style="position:absolute;top:691.00px;font-size:12px;line-height:12px;color:#8a8a8a;white-space:nowrap;left:146.20px;letter-spacing:-0.395px;">Эскиз:15</span><div style="position:absolute;left:27px;top:734.2px;width:52px;height:1px;background:#cfcfcf;"></div><div style="position:absolute;left:79px;top:734.2px;width:248px;height:1px;background:#e0e0e0;"></div><svg style="position:absolute;left:60.00px;top:716.00px;" width="12" height="12" viewBox="0 0 12 12"><path d="M11.6 0.8 H7 C-1 0.8 -1 11.2 7 11.2 H11.6 M1.2 6 H11.6" fill="none" stroke="#1e1e1e" stroke-width="1.15" /><path d="M-1.6 -2.4 L13.6 13" fill="none" stroke="#1e1e1e" stroke-width="1.05" /></svg><svg style="position:absolute;left:113.00px;top:714.00px;" width="16" height="16" viewBox="0 0 16 16"><path d="M0 3.7 L3.4 0 H16 V12.1 L12.7 16 H0 Z" fill="#9c9c9c" /><rect x="1.1" y="3.1" width="11.80" height="11.80" fill="#f2f2f2"/><path d="M3.4 5 H11.3 V13 H3.4 Z" fill="#9c9c9c" /><rect x="6" y="6.4" width="4.30" height="4.00" fill="#f2f2f2"/></svg><span style="position:absolute;top:717.00px;font-size:12px;line-height:12px;color:#8a8a8a;white-space:nowrap;left:131.20px;letter-spacing:-0.281px;">Элемент выдавливания:17</span><div style="position:absolute;left:27px;top:760.2px;width:52px;height:1px;background:#cfcfcf;"></div><div style="position:absolute;left:79px;top:760.2px;width:248px;height:1px;background:#e0e0e0;"></div><svg style="position:absolute;left:32.00px;top:739.80px;" width="16" height="15" viewBox="0 0 16 15"><path d="M0.6 7.5 C4 1.8 12 1.8 15.4 7.5 C12 13.2 4 13.2 0.6 7.5 Z" fill="#1e1e1e"/><circle cx="8" cy="7.5" r="3.6" fill="#ebebeb"/><circle cx="8" cy="7.5" r="1.8" fill="#1e1e1e"/><path d="M0 0 L16 15" fill="none" stroke="#1e1e1e" stroke-width="1.1" /></svg><svg style="position:absolute;left:60.00px;top:742.00px;" width="12" height="12" viewBox="0 0 12 12"><path d="M11.6 0.8 H7 C-1 0.8 -1 11.2 7 11.2 H11.6 M1.2 6 H11.6" fill="none" stroke="#1e1e1e" stroke-width="1.15" /></svg><svg style="position:absolute;left:113.00px;top:740.30px;" width="16" height="15.4" viewBox="0 0 16 15.4"><path d="M0.5 0.5 H7.3 V9.3 H15.5 V14.9 H0.5 Z" fill="#f7f7f7" stroke="#8c8c8c" stroke-width="1" /></svg><span style="position:absolute;top:742.00px;font-size:11.5px;line-height:11.5px;color:#8f8f8f;white-space:nowrap;left:131.80px;letter-spacing:-0.3px;">(<b style="color:#6e6e6e">−</b>)</span><span style="position:absolute;top:743.00px;font-size:12px;line-height:12px;color:#8a8a8a;white-space:nowrap;left:146.20px;letter-spacing:-0.395px;">Эскиз:16</span><div style="position:absolute;left:27px;top:786.2px;width:52px;height:1px;background:#cfcfcf;"></div><div style="position:absolute;left:79px;top:786.2px;width:248px;height:1px;background:#e0e0e0;"></div><svg style="position:absolute;left:60.00px;top:768.00px;" width="12" height="12" viewBox="0 0 12 12"><path d="M11.6 0.8 H7 C-1 0.8 -1 11.2 7 11.2 H11.6 M1.2 6 H11.6" fill="none" stroke="#1e1e1e" stroke-width="1.15" /></svg><svg style="position:absolute;left:113.00px;top:766.00px;" width="16" height="16" viewBox="0 0 16 16"><path d="M0 3.7 L3.4 0 H16 V12.1 L12.7 16 H0 Z" fill="#1e1e1e" /><rect x="1.1" y="3.1" width="11.80" height="11.80" fill="#f2f2f2"/><path d="M3.4 5 H11.3 V13 H3.4 Z" fill="#1e1e1e" /><rect x="6" y="6.4" width="4.30" height="4.00" fill="#f2f2f2"/></svg><span style="position:absolute;top:769.00px;font-size:12px;line-height:12px;color:#1e1e1e;white-space:nowrap;left:131.20px;letter-spacing:-0.281px;-webkit-text-stroke:0.22px #1e1e1e;">Элемент выдавливания:18</span><div style="position:absolute;left:27px;top:812.2px;width:52px;height:1px;background:#cfcfcf;"></div><div style="position:absolute;left:79px;top:812.2px;width:248px;height:1px;background:#e0e0e0;"></div><svg style="position:absolute;left:60.00px;top:794.00px;" width="12" height="12" viewBox="0 0 12 12"><path d="M11.6 0.8 H7 C-1 0.8 -1 11.2 7 11.2 H11.6 M1.2 6 H11.6" fill="none" stroke="#1e1e1e" stroke-width="1.15" /></svg><svg style="position:absolute;left:113.00px;top:792.00px;" width="16" height="16" viewBox="0 0 16 16"><path d="M0 3.7 L3.4 0 H16 V12.1 L12.7 16 H0 Z" fill="#1e1e1e" /><rect x="1.1" y="3.1" width="11.80" height="11.80" fill="#f2f2f2"/><path d="M3.4 5 H11.3 V13 H3.4 Z" fill="#1e1e1e" /><rect x="6" y="6.4" width="4.30" height="4.00" fill="#f2f2f2"/></svg><span style="position:absolute;top:795.00px;font-size:12px;line-height:12px;color:#1e1e1e;white-space:nowrap;left:131.20px;letter-spacing:-0.281px;-webkit-text-stroke:0.22px #1e1e1e;">Элемент выдавливания:19</span><div style="position:absolute;left:79px;top:474px;width:248px;height:1.3px;background:#35b8e0;"></div><div style="position:absolute;left:79px;top:500px;width:248px;height:1.3px;background:#35b8e0;"></div><div style="position:absolute;left:327px;top:474px;width:10px;height:1.3px;background:#bfe4f0;"></div><div style="position:absolute;left:327px;top:500px;width:10px;height:1.3px;background:#bfe4f0;"></div><div style="position:absolute;left:27px;top:813.5px;width:310px;height:6.5px;background:#f2f2f2;"></div><div style="position:absolute;left:27px;top:820px;width:310px;height:2.2px;background:#aaa;background:linear-gradient(#9c9c9c,#d6d6d6);"></div><div style="position:absolute;left:27px;top:822px;width:310px;height:23.2px;background:#f1f1f1;"></div><div style="position:absolute;left:27px;top:822px;width:25.7px;height:23.2px;background:#4d4d4d;"></div><svg style="position:absolute;left:34.10px;top:825.00px;" width="11" height="16" viewBox="0 0 11 16"><path d="M1.5 2.6 V14.2 H7 M1.5 4.4 H7 M1.5 9.2 H7" fill="none" stroke="#fff" stroke-width="1.2" /><circle cx="1.5" cy="1.5" r="1.3" fill="#4d4d4d" stroke="#fff" stroke-width="1"/><circle cx="8.6" cy="4.4" r="1.3" fill="#4d4d4d" stroke="#fff" stroke-width="1"/><circle cx="8.6" cy="9.2" r="1.3" fill="#4d4d4d" stroke="#fff" stroke-width="1"/><circle cx="8.6" cy="14.2" r="1.3" fill="#4d4d4d" stroke="#fff" stroke-width="1"/></svg><svg style="position:absolute;left:60.00px;top:825.00px;" width="12" height="16" viewBox="0 0 12 16"><path d="M0.7 0.7 H11.3 V15.3 H0.7 Z" fill="none" stroke="#1e1e1e" stroke-width="1.25" /><path d="M2.9 3 H5.3 V5.4 H2.9 Z" fill="none" stroke="#1e1e1e" stroke-width="0.9" /><path d="M7 4.2 H9.6 M7 8.2 H9.6 M7 12 H9.6" fill="none" stroke="#1e1e1e" stroke-width="1.1" /><path d="M2.6 7.8 L3.8 9 L5.6 7 M2.6 11.6 L3.8 12.8 L5.6 10.8" fill="none" stroke="#1e1e1e" stroke-width="1" /></svg><div style="position:absolute;left:27px;top:845px;width:310px;height:2.6px;background:#aaa;background:linear-gradient(#858585,#e6e6e6);"></div><div style="position:absolute;left:27px;top:847.6px;width:310px;height:192.4px;background:#f2f2f2;"></div><div style="position:absolute;left:338px;top:144.7px;width:1582px;height:895.3px;background:linear-gradient(180deg,#dedede 0%,#d2d2d3 25%,#c3c3c7 50%,#b4b4ba 75%,#aaaab2 100%);"></div><svg style="position:absolute;left:0;top:0" width="1920" height="1080" viewBox="0 0 1920 1080">
<g stroke="#151515" stroke-width="1" stroke-linejoin="round">
<!-- bulge under lower diagonal -->
<path d="M1168.5 809.5 L1169.5 820 Q1171 834 1178 840 L1184 843.5 L1218 861.5 Z" fill="#6c6c6c"/>
<!-- lower diagonal strip -->
<path d="M1052.3 683.2 L1057.5 682.5 L1231.2 867.5 L1217.5 861.3 Z" fill="#555"/>
<!-- plate top -->
<path d="M926.2 602.3 L1092.5 578.7 L1048.7 630 L1060 636.3 L1016 642.5 Z" fill="#868686"/>
<!-- left side face -->
<path d="M926.2 602.3 L926.2 615.5 L930.3 624.1 L949.1 632.9 L942.5 636.3 L942 656.2 L1012.3 688.5 L1016 642.5 Z" fill="#636363"/>
<path d="M942.5 636.3 L949.1 633.2 L996 653.6 L996 660.3 Z" fill="#8e8e8e"/>
<!-- slanted face -->
<path d="M1243.7 403 L1253.6 408.3 L1060 636.3 L1048.7 630 Z" fill="#7e7e7e"/>
<!-- tab top -->
<path d="M1243.7 403 L1303.7 394.2 L1318.8 401.8 L1253.6 408.3 Z" fill="#868686"/>
<!-- ledge top -->
<path d="M1266.2 578.7 L1267 572 L1296.2 567.5 L1311 574.6 Z" fill="#868686"/>
<!-- front face -->
<path d="M1253.6 408.3 L1314.5 400.3 Q1319.6 400 1319.3 405 L1316.3 466.5 Q1316 472.3 1310.8 473.1 L1270.7 478.8 L1266.2 578.7 L1310.3 573.2 L1299.6 852 Q1299.3 857.4 1294.5 858.1 L1231.2 867.5 L1057.5 682.5 L1012.3 688.5 L1016 642.5 L1060 636.3 Z" fill="#979797"/>
<!-- big hole -->
<defs>
<clipPath id="bh1"><ellipse cx="1296.6" cy="427.5" rx="14.1" ry="16.5" transform="rotate(14 1296.6 427.5)"/></clipPath>
<clipPath id="bh2"><ellipse cx="1291.2" cy="425.9" rx="7.4" ry="10.2" transform="rotate(14 1291.2 425.9)"/></clipPath>
<linearGradient id="bhg" x1="0" y1="0" x2="0" y2="1"><stop offset="0" stop-color="#6a6a6a"/><stop offset="1" stop-color="#8c8c8c"/></linearGradient>
</defs>
<ellipse cx="1296.6" cy="427.5" rx="14.1" ry="16.5" fill="url(#bhg)" transform="rotate(14 1296.6 427.5)"/>
<g clip-path="url(#bh1)"><ellipse cx="1292.6" cy="426.8" rx="14.1" ry="16.5" fill="#989898" stroke="#222" stroke-width="0.9" transform="rotate(14 1292.6 426.8)"/></g>
<ellipse cx="1291.2" cy="425.9" rx="7.4" ry="10.2" fill="url(#bhg)" transform="rotate(14 1291.2 425.9)"/>
<g clip-path="url(#bh2)"><ellipse cx="1287.6" cy="424.6" rx="5.6" ry="9" fill="#dcdcdc" stroke="#333" stroke-width="0.8" transform="rotate(14 1287.6 424.6)"/></g>
<ellipse cx="1291.2" cy="425.9" rx="7.4" ry="10.2" fill="none" transform="rotate(14 1291.2 425.9)"/>
<ellipse cx="1296.6" cy="427.5" rx="14.1" ry="16.5" fill="none" transform="rotate(14 1296.6 427.5)"/>
<!-- small holes -->
<defs><linearGradient id="hg" x1="0" y1="0" x2="1" y2="1"><stop offset="0" stop-color="#8a8a8a"/><stop offset="1" stop-color="#646464"/></linearGradient></defs>
<ellipse cx="1181.3" cy="624" rx="4.6" ry="5.7" fill="url(#hg)" stroke="#111" stroke-width="1.3" transform="rotate(22 1181.3 624)"/>
<ellipse cx="1259.7" cy="612.9" rx="4.6" ry="5.7" fill="url(#hg)" stroke="#111" stroke-width="1.3" transform="rotate(22 1259.7 612.9)"/>
<ellipse cx="1174.6" cy="774.6" rx="4.6" ry="5.7" fill="url(#hg)" stroke="#111" stroke-width="1.3" transform="rotate(22 1174.6 774.6)"/>
<ellipse cx="1252.7" cy="763.3" rx="4.6" ry="5.7" fill="url(#hg)" stroke="#111" stroke-width="1.3" transform="rotate(22 1252.7 763.3)"/>
<ellipse cx="992.4" cy="612.6" rx="4.8" ry="1.7" fill="#8a8a8a"/>
</g>
<!-- triad -->
<g>
<line x1="412.3" y1="962" x2="412.3" y2="927" stroke="#4c82e2" stroke-width="3.8"/>
<line x1="413.4" y1="962" x2="413.4" y2="927" stroke="#6a9cf0" stroke-width="1.2"/>
<path d="M408.9 929 Q412.6 918 413.6 912.6 Q415 918 418.2 929 Z" fill="#5a8ee8"/>
<path d="M412.6 928 L413.6 914.5 L414.6 928 Z" fill="#cfe0fa"/>
<line x1="407" y1="966.6" x2="380" y2="970.9" stroke="#e06464" stroke-width="3.6"/>
<path d="M381.6 966.8 L382.6 974.6 L366 972.6 Z" fill="#e46e6e"/>
<line x1="416" y1="968.2" x2="432" y2="976" stroke="#4aa456" stroke-width="3.6"/>
<path d="M434.4 972 L430.4 980.2 L443 980.4 Z" fill="#52ac5c"/>
<circle cx="411.7" cy="966.2" r="6.6" fill="#e4dc68"/>
<circle cx="411" cy="965.4" r="3.2" fill="#f4f0a8"/>
<circle cx="415.6" cy="968" r="1.8" fill="#3fa24a"/>
<rect x="404.6" y="964.6" width="2.4" height="3.6" fill="#f06a2a"/>
</g>
</svg>
<span style="position:absolute;left:410.6px;top:899.6px;font-family:'Liberation Serif',serif;font-size:13.5px;line-height:14px;color:#4a7fe2">Z</span>
<span style="position:absolute;left:354.8px;top:967.8px;font-family:'Liberation Sans',sans-serif;font-size:12.5px;line-height:13px;color:#e24848">X</span>
<span style="position:absolute;left:442.6px;top:975.6px;font-family:'Liberation Sans',sans-serif;font-size:12px;line-height:13px;color:#3fb04a">Y</span>
<div style="position:absolute;left:848px;top:144.6px;width:561.5px;height:26px;background:#5a5a5a;"></div><div style="position:absolute;left:849px;top:144.7px;width:559.5px;height:25px;background:#f1f1f1;"></div><div style="position:absolute;left:849px;top:144.7px;width:15px;height:25px;background:#e6e6e6;"></div><div style="position:absolute;left:338px;top:143.5px;width:1582px;height:1.2px;background:#7a7a7a;"></div><svg style="position:absolute;left:850.45px;top:149.25px;" width="12.3" height="4.7" viewBox="0 0 12.3 4.7"><rect x="0" y="0" width="1.8" height="1.8" fill="#3a3a3a"/><rect x="0" y="2.9" width="1.8" height="1.8" fill="#3a3a3a"/><rect x="3.5" y="0" width="1.8" height="1.8" fill="#3a3a3a"/><rect x="3.5" y="2.9" width="1.8" height="1.8" fill="#3a3a3a"/><rect x="7" y="0" width="1.8" height="1.8" fill="#3a3a3a"/><rect x="7" y="2.9" width="1.8" height="1.8" fill="#3a3a3a"/><rect x="10.5" y="0" width="1.8" height="1.8" fill="#3a3a3a"/><rect x="10.5" y="2.9" width="1.8" height="1.8" fill="#3a3a3a"/></svg><div style="position:absolute;left:863.6999999999999px;top:144.7px;width:1.2px;height:25px;background:#5a5a5a;"></div><svg style="position:absolute;left:871.00px;top:149.00px;" width="16" height="16" viewBox="0 0 16 16"><path d="M1.3 1.5 H7.4 V8 H14.6 V14.6 H1.3 Z" fill="none" stroke="#1e1e1e" stroke-width="1.4" /><circle cx="1.3" cy="1.5" r="1.25" fill="#f1f1f1" stroke="#1e1e1e" stroke-width="1"/><circle cx="7.4" cy="1.5" r="1.25" fill="#f1f1f1" stroke="#1e1e1e" stroke-width="1"/><circle cx="7.4" cy="8" r="1.25" fill="#f1f1f1" stroke="#1e1e1e" stroke-width="1"/><circle cx="14.6" cy="8" r="1.25" fill="#f1f1f1" stroke="#1e1e1e" stroke-width="1"/><circle cx="14.6" cy="14.6" r="1.25" fill="#f1f1f1" stroke="#1e1e1e" stroke-width="1"/><circle cx="1.3" cy="14.6" r="1.25" fill="#f1f1f1" stroke="#1e1e1e" stroke-width="1"/></svg><div style="position:absolute;left:892.9px;top:144.7px;width:1.2px;height:25px;background:#5a5a5a;"></div><svg style="position:absolute;left:899.00px;top:149.20px;" width="17" height="16" viewBox="0 0 17 16"><path d="M6.4 2.4 H15.6 V8.8 H6.4 Z M11 2.4 V8.8" fill="none" stroke="#1e1e1e" stroke-width="1" stroke-dasharray="1 1.1"/><circle cx="6" cy="5.8" r="5.2" fill="none" stroke="#1e1e1e" stroke-width="1.3"/><path d="M9.6 9.6 L14.6 14.6" fill="none" stroke="#1e1e1e" stroke-width="2.2" /></svg><svg style="position:absolute;left:927.30px;top:154.20px;" width="9.4" height="4.6" viewBox="0 0 9.4 4.6"><path d="M0 0 H9.4 L4.7 4.6 Z" fill="#1e1e1e" /></svg><svg style="position:absolute;left:948.00px;top:149.00px;" width="16" height="16" viewBox="0 0 16 16"><path d="M0 15.6 L5.4 9 H16 L11.6 15.6 Z" fill="#1e1e1e" /><path d="M6.4 12 V5 H3.2 L8 0.8 L12.8 5 H9.6 V12 Z" fill="#f1f1f1" stroke="#1e1e1e" stroke-width="1.1" /></svg><svg style="position:absolute;left:975.00px;top:149.50px;" width="16" height="16" viewBox="0 0 16 16"><path d="M6.2 7.6 V1.4 M8 9.4 H15 M5 10.8 L0.4 15.4" fill="none" stroke="#1e1e1e" stroke-width="1.2" /><path d="M4.2 3.6 L6.2 0.2 L8.2 3.6 Z M12.6 7.4 L16 9.4 L12.6 11.4 Z M0 12.4 L3.4 15.8 L0 15.8 Z" fill="#1e1e1e" /><path d="M4.6 7.8 H8 V11.2 H4.6 Z" fill="#f1f1f1" stroke="#1e1e1e" stroke-width="1.2" /></svg><svg style="position:absolute;left:1000.90px;top:154.20px;" width="9.4" height="4.6" viewBox="0 0 9.4 4.6"><path d="M0 0 H9.4 L4.7 4.6 Z" fill="#1e1e1e" /></svg><div style="position:absolute;left:1016.9px;top:144.7px;width:1.2px;height:25px;background:#5a5a5a;"></div><div style="position:absolute;left:1019.6px;top:144.7px;width:24.999999999999886px;height:25px;background:#4d4d4d;"></div><svg style="position:absolute;left:1023.80px;top:148.00px;" width="16.4" height="17" viewBox="0 0 16.4 17"><path d="M8.4 0 L16.4 4.6 V13 L9.6 17 L0.4 13 V4.6 Z" fill="#fff" /><path d="M0.4 4.6 L9.8 8.4 L16.4 4.6 M9.8 8.4 V17" fill="none" stroke="#4d4d4d" stroke-width="1" /></svg><svg style="position:absolute;left:1051.20px;top:148.00px;" width="16" height="17" viewBox="0 0 16 17"><path d="M8 0.6 L15.4 4.6 V12.6 L9.4 16.4 L0.6 12.6 V4.6 Z M0.6 4.6 L9.4 8.6 L15.4 4.6 M9.4 8.6 V16.4 M8 0.6 V8.4 L0.6 12.6 M8 8.4 L15.4 12.6" fill="none" stroke="#1e1e1e" stroke-width="1.1" /></svg><svg style="position:absolute;left:1078.00px;top:154.20px;" width="9.4" height="4.6" viewBox="0 0 9.4 4.6"><path d="M0 0 H9.4 L4.7 4.6 Z" fill="#1e1e1e" /></svg><div style="position:absolute;left:1094.0px;top:144.7px;width:1.2px;height:25px;background:#5a5a5a;"></div><svg style="position:absolute;left:1101.50px;top:148.80px;" width="15.4" height="15" viewBox="0 0 15.4 15"><g transform="translate(0.2 2.8)"><path d="M0.4 5 C3.6 -0.4 11.4 -0.4 14.6 5 C11.4 10.4 3.6 10.4 0.4 5 Z" fill="#1e1e1e"/><circle cx="7.5" cy="5" r="3.3" fill="#f1f1f1"/><circle cx="7.5" cy="5" r="1.7" fill="#1e1e1e"/></g><path d="M0 0 L15.4 15" fill="none" stroke="#1e1e1e" stroke-width="1.1" /></svg><svg style="position:absolute;left:1128.30px;top:154.20px;" width="9.4" height="4.6" viewBox="0 0 9.4 4.6"><path d="M0 0 H9.4 L4.7 4.6 Z" fill="#1e1e1e" /></svg><svg style="position:absolute;left:1149.10px;top:148.80px;" width="16" height="15" viewBox="0 0 16 15"><path d="M0 1.6 H16 V13 H0 Z" fill="#1e1e1e" /><g transform="translate(0.6 2.3)"><path d="M0.4 5 C3.6 0.4 11.4 0.4 14.6 5 C11.4 9.6 3.6 9.6 0.4 5 Z" fill="#f1f1f1"/><circle cx="7.5" cy="5" r="3" fill="#1e1e1e"/><circle cx="7.5" cy="5" r="1.6" fill="#f1f1f1"/><circle cx="7.5" cy="5" r="0.7" fill="#1e1e1e"/></g><path d="M0 0 L2 1.8 M14 12.8 L16 15" fill="none" stroke="#1e1e1e" stroke-width="1.1" /></svg><svg style="position:absolute;left:1176.10px;top:154.20px;" width="9.4" height="4.6" viewBox="0 0 9.4 4.6"><path d="M0 0 H9.4 L4.7 4.6 Z" fill="#1e1e1e" /></svg><div style="position:absolute;left:1191.9px;top:144.7px;width:1.2px;height:25px;background:#5a5a5a;"></div><div style="position:absolute;left:1194.2px;top:144.7px;width:25.399999999999864px;height:25px;background:#4d4d4d;"></div><svg style="position:absolute;left:1199.00px;top:150.50px;" width="16" height="14" viewBox="0 0 16 14"><path d="M2 10.6 L14.4 2.6" fill="none" stroke="#fff" stroke-width="1.2" /><circle cx="2" cy="10.6" r="1.5" fill="#4d4d4d" stroke="#fff" stroke-width="1.1"/><circle cx="14.4" cy="2.6" r="1.5" fill="#4d4d4d" stroke="#fff" stroke-width="1.1"/><path d="M3.4 1.7999999999999998 L5.4 3.8 L3.4 5.8 L1.4 3.8 Z" fill="#4d4d4d" stroke="#fff" stroke-width="1.1"/><path d="M13 9.6 L15 11.6 L13 13.6 L11 11.6 Z" fill="#4d4d4d" stroke="#fff" stroke-width="1.1"/></svg><svg style="position:absolute;left:1225.80px;top:148.20px;" width="16.4" height="17" viewBox="0 0 16.4 17"><path d="M5.6 2.6 H16.4 V15.4 L15 16.8 H5.6 Z" fill="#1e1e1e" /><path d="M6.8 0.4 V3 M9.4 0.4 V3 M12 0.4 V3 M14.6 0.4 V3 M16 0.4 V3" fill="none" stroke="#1e1e1e" stroke-width="1.2" /><rect x="6.8" y="5.6" width="7.60" height="9.60" fill="#f1f1f1"/><path d="M0.9 7.4 H4.6 V16.2 H0.9 Z" fill="#f1f1f1" stroke="#1e1e1e" stroke-width="1.2" /><path d="M1.2 9.4 L2.4 10.4 L1.2 11.4 M1.2 12.4 L2.4 13.4 L1.2 14.4" fill="none" stroke="#1e1e1e" stroke-width="0.8" /></svg><div style="position:absolute;left:1248.3px;top:144.7px;width:25.5px;height:25px;background:#4d4d4d;"></div><svg style="position:absolute;left:1252.80px;top:148.50px;" width="16.4" height="16.4" viewBox="0 0 16.4 16.4"><path d="M0.4 1.4 L6.6 0.2 L12 0.6 V6.4 L16.2 7.6 V14.6 L11.6 16.4 L6.6 13.4 L1.2 14.6 Z" fill="#fff" /><path d="M2.2 3.6 L7.4 12.2 L2.2 13.2 Z M6.4 11 L9.2 12.8 L9.2 7.2 Z" fill="#4d4d4d" /><path d="M0.6 1.6 L8.2 13.6" fill="none" stroke="#4d4d4d" stroke-width="1" /><path d="M8.6 1.2 L11.6 1.4 V6.6 L8.6 8.4 Z M12.2 8.2 L15.8 8.6 V14.2 L12.2 15.6 Z" fill="#c4c4c4" /></svg><svg style="position:absolute;left:1279.90px;top:148.20px;" width="15.4" height="17" viewBox="0 0 15.4 17"><path d="M0 5.4 L4.6 0 L15.4 9.6 V13.4 L11.4 17 H0 Z" fill="#1e1e1e" /><path d="M2.4 4.8 L5 2.2 L13.4 9.8 L10.8 12.4 H7 M4 6.8 L5.6 5.2 M10.4 14.4 L13.2 11.6" fill="none" stroke="#f1f1f1" stroke-width="1.1" /><path d="M3.4 8 V13.6 H10" fill="none" stroke="#f1f1f1" stroke-width="1.3" /></svg><div style="position:absolute;left:1302.6000000000001px;top:144.7px;width:1.2px;height:25px;background:#5a5a5a;"></div><div style="position:absolute;left:1304.3px;top:144.7px;width:46.5px;height:25px;background:#4d4d4d;"></div><svg style="position:absolute;left:1308.90px;top:148.90px;" width="16" height="16" viewBox="0 0 16 16"><path d="M0 0 H16 L9.6 8.6 V14.4 Q8 16.4 6.4 14.4 V8.6 Z" fill="#fff" /></svg><svg style="position:absolute;left:1336.10px;top:154.00px;" width="9.4" height="4.6" viewBox="0 0 9.4 4.6"><path d="M0 0 H9.4 L4.7 4.6 Z" fill="#fff" /></svg><div style="position:absolute;left:1351.4px;top:144.7px;width:1.2px;height:25px;background:#5a5a5a;"></div><svg style="position:absolute;left:1358.70px;top:148.70px;" width="16.4" height="16.4" viewBox="0 0 16.4 16.4"><path d="M0.4 0.8 H16.4" fill="none" stroke="#1e1e1e" stroke-width="1.6" /><path d="M2.4 1 V8" fill="none" stroke="#1e1e1e" stroke-width="1.1" /><path d="M0.8 6.8 L2.4 9.4 L4 6.8 Z" fill="#1e1e1e" /><path d="M0.9 11.4 H6.9 V15.7 H0.9 Z M0.9 13.5 H6.9 M3.9 11.4 V15.7" fill="none" stroke="#1e1e1e" stroke-width="1.3" /><path d="M9.4 1.4 H14.4 V16 H9.4 Z" fill="#3a3a3a" /><path d="M10.4 3 L13.4 6 L10.4 9 L13.4 12 L10.4 15 M13.4 3 L10.4 6 L13.4 9 L10.4 12 L13.4 15" fill="none" stroke="#ddd" stroke-width="0.9" /></svg><svg style="position:absolute;left:1386.80px;top:149.80px;" width="16" height="15.4" viewBox="0 0 16 15.4"><path d="M11.4 3 L13 0.6 Q14.4 -0.4 15.4 0.6 Q16.4 1.8 15.4 3 L13.4 4.6 L13.8 5.6 L12.6 6.8 L4 14 L0.6 15.2 L0.8 13.2 L9.2 3.4 L10.4 2.2 Z" fill="#c6c6c6" /></svg><div style="position:absolute;left:0;top:1040px;width:1920px;height:40px;background:linear-gradient(90deg,#22353e 0%,#22343f 30%,#1f2f43 60%,#1c2a47 100%);"></div><div style="position:absolute;left:491px;top:1040px;width:48px;height:40px;background:#4f6169;"></div><svg style="position:absolute;left:15.50px;top:1051.50px;" width="17" height="17" viewBox="0 0 17 17"><path d="M0 2.4 L6.8 1.4 V8 H0 Z M7.8 1.2 L17 0 V8 H7.8 Z M0 9 H6.8 V15.6 L0 14.6 Z M7.8 9 H17 V17 L7.8 15.8 Z" fill="#fff" /></svg><svg style="position:absolute;left:61.00px;top:1049.00px;" width="22" height="23" viewBox="0 0 22 23"><circle cx="13.4" cy="8.6" r="7.4" fill="none" stroke="#fff" stroke-width="2"/><path d="M8.2 14 L1 21.6" fill="none" stroke="#fff" stroke-width="2.4" /></svg><svg style="position:absolute;left:111.60px;top:1051.00px;" width="22" height="18" viewBox="0 0 22 18"><path d="M0.4 1.4 Q0.4 0 1.8 0 H8.4 L10 2 H0.4 Z" fill="#e8a90c" /><path d="M0.4 1.8 H20.6 Q21.6 1.8 21.6 2.8 V17 H0.4 Z" fill="#ffd666" /><path d="M4.4 18 V11.6 Q4.4 10.4 5.6 10.4 H16.4 Q17.6 10.4 17.6 11.6 V18 H14.2 V13.6 H7.8 V18 Z" fill="#3d9be9" /><path d="M0.4 17 H21.6 V18 H0.4Z" fill="#e9b838" /></svg><svg style="position:absolute;left:159.90px;top:1048.00px;" width="24" height="24" viewBox="0 0 24 24"><defs><linearGradient id="yg" x1="0" y1="0" x2="1" y2="0"><stop offset="0" stop-color="#ff7a1a"/><stop offset="0.7" stop-color="#ff3d3d"/><stop offset="1" stop-color="#ff5ad8"/></linearGradient></defs><circle cx="12" cy="12" r="12" fill="#fff"/><path d="M5.6 5.6 L12 12.6 L18.4 5.6" fill="none" stroke="url(#yg)" stroke-width="3.2" stroke-linecap="round" stroke-linejoin="round"/><path d="M12 12.6 V20" fill="none" stroke="#ff3a2e" stroke-width="3.2" stroke-linecap="round"/></svg><svg style="position:absolute;left:209.00px;top:1048.00px;" width="24" height="24" viewBox="0 0 24 24"><rect x="0.6" y="0.6" width="22.8" height="22.8" fill="#00ee00" stroke="#0020e0" stroke-width="1.2"/><path d="M2 3 L9 1.6 L22 10 L21 14 L15 21.6 L8.6 21.6 L8 17 L2.4 10 Z" fill="#0a0a0a" /><path d="M9.6 16.4 L20.4 11.6 L20.6 14 L14.6 20.6 L9.8 20.6 Z" fill="#cfcfcf" /><path d="M11 18.4 L19.4 13.8" fill="none" stroke="#555" stroke-width="1.4" /><path d="M4 5 L9.6 3.8 M8.6 7 L19 13.6" fill="none" stroke="#9a9a9a" stroke-width="0.8" /></svg><svg style="position:absolute;left:258.00px;top:1048.00px;" width="24" height="24" viewBox="0 0 24 24"><rect width="24" height="8" fill="#fff"/><rect x="2.4" y="1.2" width="2.6" height="6.8" fill="#f00"/><rect x="8.4" y="1.2" width="2.6" height="6.8" fill="#f00"/><rect x="12.6" y="1.2" width="2.6" height="6.8" fill="#f00"/><rect x="16.6" y="1.2" width="2.6" height="6.8" fill="#f00"/><rect x="20.4" y="1.2" width="2.6" height="6.8" fill="#f00"/><rect y="8" width="24" height="8.4" fill="#0a1eff"/><rect y="16.4" width="24" height="7.6" fill="#f00"/><rect x="2.4" y="16.4" width="2.6" height="5.4" fill="#0a1eff"/><rect x="8.4" y="16.4" width="2.6" height="5.4" fill="#0a1eff"/><rect x="12.6" y="16.4" width="2.6" height="5.4" fill="#0a1eff"/><rect x="16.6" y="16.4" width="2.6" height="5.4" fill="#0a1eff"/><rect x="20.4" y="16.4" width="2.6" height="5.4" fill="#0a1eff"/><text x="12" y="15.6" text-anchor="middle" font-family="Liberation Sans" font-weight="bold" font-size="10.5" fill="#fff" textLength="17" lengthAdjust="spacingAndGlyphs">HX</text></svg><svg style="position:absolute;left:307.00px;top:1048.00px;" width="24" height="24" viewBox="0 0 24 24"><path d="M2.4 21.6 L13.6 9.4" fill="none" stroke="#d9b62c" stroke-width="2.2" /><circle cx="17.2" cy="5.2" r="3.6" fill="none" stroke="#e8cc40" stroke-width="3"/><path d="M3.4 19.6 L5.6 21.8 M5.4 17.6 L7.2 19.4" fill="none" stroke="#d9b62c" stroke-width="1.6" /><text x="-0.4" y="9.6" font-family="Liberation Sans" font-weight="bold" font-size="12.5" fill="#ff2626" stroke="#fff" stroke-width="0.9" paint-order="stroke">Q</text><text x="8" y="17.6" font-family="Liberation Sans" font-weight="bold" font-size="12.5" fill="#ff2626" stroke="#fff" stroke-width="0.9" paint-order="stroke">S</text><text x="15.6" y="23.8" font-family="Liberation Sans" font-weight="bold" font-size="12.5" fill="#ff2626" stroke="#fff" stroke-width="0.9" paint-order="stroke">L</text></svg><svg style="position:absolute;left:357.00px;top:1049.00px;" width="22" height="22" viewBox="0 0 22 22"><path d="M0 0.4 H22 V11 L16 12.4 H6 L0 11 Z" fill="#c9c9c9" /><path d="M2.4 3.4 H19.6 V8.8 H2.4 Z" fill="#3fd25a" /><path d="M3 4.6 H19 M3 6.2 H19 M3 7.8 H19" fill="none" stroke="#bfeec6" stroke-width="0.6" stroke-dasharray="1 1"/><circle cx="11" cy="14.6" r="6.6" fill="#858585"/><rect x="12.4" y="10.4" width="2.6" height="1.8" fill="#ff1010"/></svg><svg style="position:absolute;left:405.50px;top:1048.30px;" width="23" height="23" viewBox="0 0 23 23"><circle cx="11.5" cy="11.5" r="10.6" fill="#0f7896" stroke="#fff" stroke-width="1.3"/><path d="M15 6.4 H9 Q7.2 6.4 7.2 8.2 V9.8 Q7.2 11.6 9 11.6 H14 Q15.8 11.6 15.8 13.4 V15 Q15.8 16.8 14 16.8 H8 M8 9.2 H13.4 M9.6 14 H15" fill="none" stroke="#fff" stroke-width="1.4" /></svg><svg style="position:absolute;left:454.00px;top:1048.00px;" width="24" height="24" viewBox="0 0 24 24"><circle cx="12" cy="12" r="12" fill="#72b832"/><circle cx="12" cy="9" r="9" fill="#86c644" opacity="0.5"/><path d="M7 6 L8.4 15 L9.6 22 M8.4 15 C10 17.6 15.4 17.6 16.2 13.4 L15.6 5.6 M16.2 13.4 C16.4 16 18.4 16.4 20.4 15.4" fill="none" stroke="#fff" stroke-width="2.8" stroke-linecap="round"/></svg><svg style="position:absolute;left:503.00px;top:1048.00px;" width="24" height="24" viewBox="0 0 24 24"><rect x="0.6" y="0.6" width="22.8" height="22.8" fill="#2d2a2c" stroke="#00aef0" stroke-width="1.2"/><circle cx="12" cy="12.2" r="8.6" fill="none" stroke="#00aef0" stroke-width="1.3"/><path d="M8 6.4 V17.6 M8.2 12.6 L16 5.6 M10.2 11 L18.2 18.4 M8.2 15.8 L11.4 12.4" fill="none" stroke="#00aef0" stroke-width="1.4" /></svg><svg style="position:absolute;left:553.00px;top:1048.30px;" width="22" height="23" viewBox="0 0 22 23"><path d="M10 3 H22 V20 H10 Z" fill="#fff" /><path d="M14.4 6 H20 M14.4 8.6 H20 M14.4 11.2 H20 M14.4 13.8 H20 M14.4 16.4 H20" fill="none" stroke="#2b579a" stroke-width="1" /><path d="M0 2.6 L13 0 V23 L0 20.4 Z" fill="#2b579a" /><text x="6.6" y="15.6" text-anchor="middle" font-family="Liberation Sans" font-weight="bold" font-size="10" fill="#fff">W</text></svg><div style="position:absolute;left:103px;top:1077.7px;width:40.19999999999999px;height:2.3px;background:#76b9ed;"></div><div style="position:absolute;left:152px;top:1077.7px;width:39.69999999999999px;height:2.3px;background:#76b9ed;"></div><div style="position:absolute;left:250.2px;top:1077.7px;width:39.60000000000002px;height:2.3px;background:#76b9ed;"></div><div style="position:absolute;left:299px;top:1077.7px;width:39.69999999999999px;height:2.3px;background:#76b9ed;"></div><div style="position:absolute;left:348px;top:1077.7px;width:39.69999999999999px;height:2.3px;background:#76b9ed;"></div><div style="position:absolute;left:446.2px;top:1077.7px;width:39.60000000000002px;height:2.3px;background:#76b9ed;"></div><div style="position:absolute;left:491px;top:1077.7px;width:48px;height:2.3px;background:#76b9ed;"></div><div style="position:absolute;left:544px;top:1077.7px;width:39.700000000000045px;height:2.3px;background:#76b9ed;"></div><svg style="position:absolute;left:1698.70px;top:1055.60px;" width="13" height="8" viewBox="0 0 13 8"><path d="M0.8 7.2 L6.5 1.2 L12.2 7.2" fill="none" stroke="#fff" stroke-width="1.3" /></svg><svg style="position:absolute;left:1720.70px;top:1053.90px;" width="17" height="13" viewBox="0 0 17 13"><path d="M3.6 2.8 V0.6 H16.4 V9 H3.6" fill="none" stroke="#fff" stroke-width="1.1" /><path d="M9 9 V12.2 M5.6 12.4 H12.6" fill="none" stroke="#fff" stroke-width="1.1" /><path d="M0.6 2.6 H5 V5.4 H0.6 Z M2.8 5.4 V12.4" fill="none" stroke="#fff" stroke-width="1" /><path d="M1.8 3.6 L2.8 4.4 L3.8 3.6" fill="none" stroke="#fff" stroke-width="0.7" /></svg><svg style="position:absolute;left:1745.00px;top:1053.50px;" width="16" height="13" viewBox="0 0 16 13"><path d="M0.6 4.4 H3 L6.4 1 V12 L3 8.6 H0.6 Z" fill="none" stroke="#fff" stroke-width="1.1" /><path d="M8.6 4.4 Q10 6.5 8.6 8.6" fill="none" stroke="#fff" stroke-width="1" /><path d="M10.8 2.6 Q13.2 6.5 10.8 10.4" fill="none" stroke="#cfd4dc" stroke-width="1" /><path d="M13 0.8 Q16.4 6.5 13 12.2" fill="none" stroke="#8a93a3" stroke-width="1" /></svg><span style="position:absolute;top:1054.00px;font-size:12px;line-height:12px;color:#fff;white-space:nowrap;left:1772.50px;letter-spacing:-0.800px;">РУС</span><span style="position:absolute;top:1045.00px;font-size:12px;line-height:12px;color:#fff;white-space:nowrap;left:1833.50px;transform:translateX(-50%);letter-spacing:-0.800px;">12:01</span><span style="position:absolute;top:1063.00px;font-size:12px;line-height:12px;color:#fff;white-space:nowrap;left:1834.00px;transform:translateX(-50%);letter-spacing:-0.696px;">05.01.2026</span><svg style="position:absolute;left:1879.00px;top:1051.60px;" width="16" height="16" viewBox="0 0 16 16"><path d="M0.6 0.6 H15.4 V12 H10.6 L8 14.8 L5.4 12 H0.6 Z" fill="none" stroke="#fff" stroke-width="1.2" /></svg><div style="position:absolute;left:1915px;top:1040px;width:1px;height:40px;background:#8a919c;"></div>
</body></html>
